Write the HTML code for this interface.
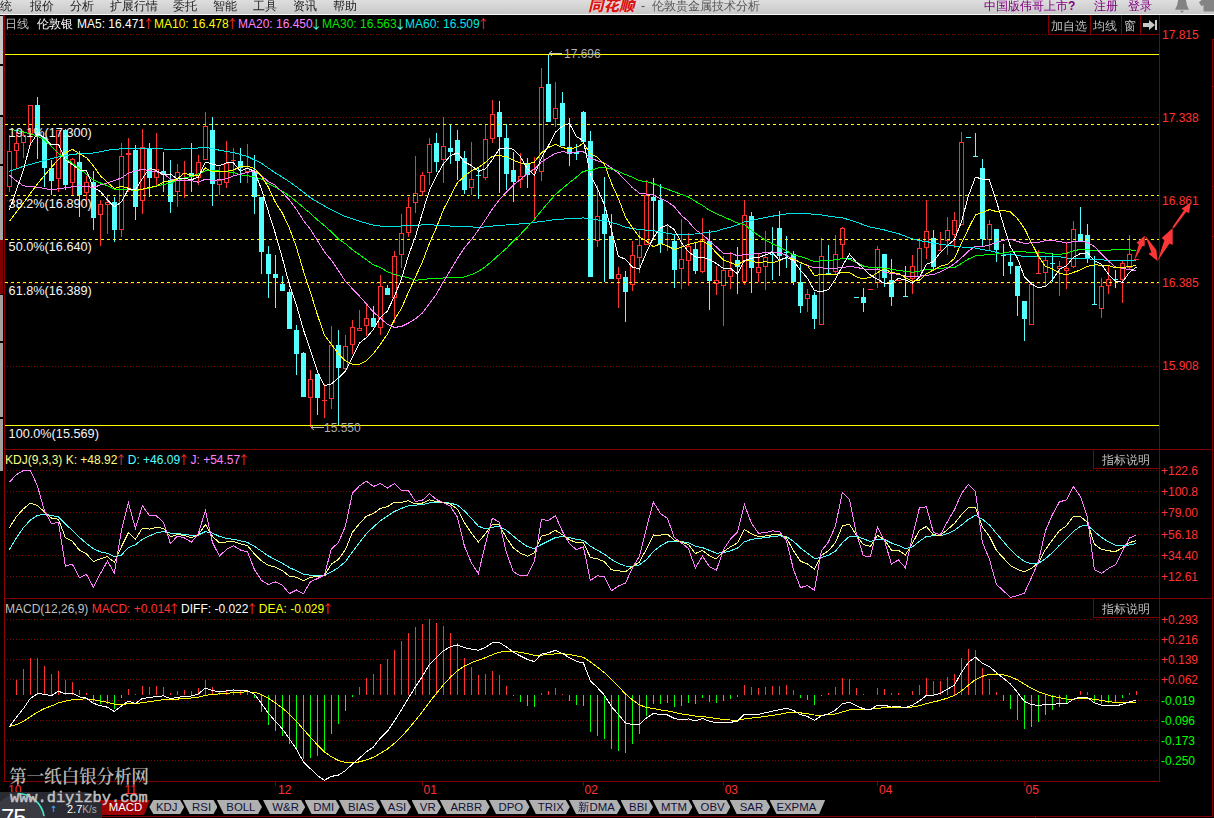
<!DOCTYPE html><html><head><meta charset="utf-8"><title>伦敦贵金属技术分析</title><style>
html,body{margin:0;padding:0;background:#000;}
body{width:1214px;height:818px;position:relative;overflow:hidden;font:12px/14px "Liberation Sans","WenQuanYi Zen Hei","Noto Sans CJK SC",sans-serif;color:#c0c0c0;}
.t{position:absolute;white-space:nowrap;line-height:14px;height:14px;}
#title{position:absolute;left:0;top:0;width:1214px;height:15px;background:linear-gradient(#dedede,#d2d2d2 55%,#c6c6c6);border-bottom:1px solid #f8f8f8;box-sizing:border-box;overflow:hidden;color:#222;}
#title .t{top:-1px;}
.ar{font-family:'Noto Sans CJK SC',sans-serif;display:inline-block;width:7px;text-indent:-2.5px;overflow:visible;vertical-align:top;}
.ls{position:absolute;left:0;width:3px;background:#b4b4b4;}
.r{color:#ff3232}.c{color:#54ffff}.w{color:#fff}.y{color:#ffff00}.m{color:#ff80ff}.g{color:#00e600}.b{color:#00e6e6}
.ax{position:absolute;left:1162px;white-space:nowrap;line-height:14px;height:14px;font-size:12px}
.tab{position:absolute;top:800px;height:14px;line-height:14px;background:#b0b0b0;color:#222;text-align:center;font-size:11.4px;color:#101038;clip-path:polygon(0 0,calc(100% - 4px) 0,100% 50%,calc(100% - 4px) 100%,7px 100%);padding-left:3px;box-sizing:border-box}
</style></head><body>
<svg width="1214" height="818" viewBox="0 0 1214 818" style="position:absolute;left:0;top:0" shape-rendering="crispEdges">
<line x1="7" y1="34.5" x2="1159" y2="34.5" stroke="#8a0000" stroke-width="1" stroke-dasharray="1 2"/>
<line x1="7" y1="117.5" x2="1159" y2="117.5" stroke="#8a0000" stroke-width="1" stroke-dasharray="1 2"/>
<line x1="7" y1="200.5" x2="1159" y2="200.5" stroke="#8a0000" stroke-width="1" stroke-dasharray="1 2"/>
<line x1="7" y1="283.5" x2="1159" y2="283.5" stroke="#8a0000" stroke-width="1" stroke-dasharray="1 2"/>
<line x1="7" y1="366.5" x2="1159" y2="366.5" stroke="#8a0000" stroke-width="1" stroke-dasharray="1 2"/>
<line x1="7" y1="470.5" x2="1159" y2="470.5" stroke="#8a0000" stroke-width="1" stroke-dasharray="1 2"/>
<line x1="7" y1="491.5" x2="1159" y2="491.5" stroke="#8a0000" stroke-width="1" stroke-dasharray="1 2"/>
<line x1="7" y1="512.5" x2="1159" y2="512.5" stroke="#8a0000" stroke-width="1" stroke-dasharray="1 2"/>
<line x1="7" y1="534.5" x2="1159" y2="534.5" stroke="#8a0000" stroke-width="1" stroke-dasharray="1 2"/>
<line x1="7" y1="555.5" x2="1159" y2="555.5" stroke="#8a0000" stroke-width="1" stroke-dasharray="1 2"/>
<line x1="7" y1="576.5" x2="1159" y2="576.5" stroke="#8a0000" stroke-width="1" stroke-dasharray="1 2"/>
<line x1="7" y1="619.5" x2="1159" y2="619.5" stroke="#8a0000" stroke-width="1" stroke-dasharray="1 2"/>
<line x1="7" y1="639.5" x2="1159" y2="639.5" stroke="#8a0000" stroke-width="1" stroke-dasharray="1 2"/>
<line x1="7" y1="659.5" x2="1159" y2="659.5" stroke="#8a0000" stroke-width="1" stroke-dasharray="1 2"/>
<line x1="7" y1="679.5" x2="1159" y2="679.5" stroke="#8a0000" stroke-width="1" stroke-dasharray="1 2"/>
<line x1="7" y1="700.5" x2="1159" y2="700.5" stroke="#8a0000" stroke-width="1" stroke-dasharray="1 2"/>
<line x1="7" y1="720.5" x2="1159" y2="720.5" stroke="#8a0000" stroke-width="1" stroke-dasharray="1 2"/>
<line x1="7" y1="740.5" x2="1159" y2="740.5" stroke="#8a0000" stroke-width="1" stroke-dasharray="1 2"/>
<line x1="7" y1="760.5" x2="1159" y2="760.5" stroke="#8a0000" stroke-width="1" stroke-dasharray="1 2"/>
<line x1="4.5" y1="14" x2="4.5" y2="782" stroke="#8c0000"/>
<line x1="3.5" y1="15" x2="3.5" y2="117" stroke="#800000"/>
<line x1="1159.5" y1="14" x2="1159.5" y2="781" stroke="#820000"/>
<line x1="1212.5" y1="39" x2="1212.5" y2="816" stroke="#820000"/>
<line x1="1212" y1="39.5" x2="1214" y2="39.5" stroke="#820000"/>
<line x1="1212" y1="86.5" x2="1214" y2="86.5" stroke="#820000"/>
<line x1="1212" y1="186.5" x2="1214" y2="186.5" stroke="#820000"/>
<line x1="1212" y1="236.5" x2="1214" y2="236.5" stroke="#820000"/>
<line x1="5" y1="449.5" x2="1212" y2="449.5" stroke="#820000"/>
<line x1="5" y1="598.5" x2="1212" y2="598.5" stroke="#820000"/>
<line x1="5" y1="781.5" x2="1160" y2="781.5" stroke="#820000"/>
<line x1="0" y1="816.5" x2="1213" y2="816.5" stroke="#820000"/>
<line x1="1035.5" y1="816" x2="1035.5" y2="818" stroke="#820000"/>
<line x1="1048.5" y1="14" x2="1048.5" y2="34" stroke="#820000"/>
<line x1="1090.5" y1="14" x2="1090.5" y2="34" stroke="#820000"/>
<line x1="1121.5" y1="14" x2="1121.5" y2="34" stroke="#820000"/>
<line x1="1140.5" y1="14" x2="1140.5" y2="34" stroke="#820000"/>
<line x1="1048" y1="34.5" x2="1160" y2="34.5" stroke="#820000"/>
<line x1="1093.5" y1="449" x2="1093.5" y2="468.5" stroke="#820000"/>
<line x1="1093" y1="468.5" x2="1160" y2="468.5" stroke="#820000"/>
<line x1="1093.5" y1="598" x2="1093.5" y2="617.5" stroke="#820000"/>
<line x1="1093" y1="617.5" x2="1160" y2="617.5" stroke="#820000"/>
<line x1="121.5" y1="782" x2="121.5" y2="786" stroke="#820000"/>
<line x1="275.5" y1="782" x2="275.5" y2="786" stroke="#820000"/>
<line x1="422.5" y1="782" x2="422.5" y2="786" stroke="#820000"/>
<line x1="583.5" y1="782" x2="583.5" y2="786" stroke="#820000"/>
<line x1="723.5" y1="782" x2="723.5" y2="786" stroke="#820000"/>
<line x1="877.5" y1="782" x2="877.5" y2="786" stroke="#820000"/>
<line x1="1024.5" y1="782" x2="1024.5" y2="786" stroke="#820000"/>
<line x1="9.5" y1="135" x2="9.5" y2="151" stroke="#ff3232"/>
<line x1="9.5" y1="186" x2="9.5" y2="192" stroke="#ff3232"/>
<rect x="7.5" y="151.5" width="4" height="35" fill="#000" stroke="#ff3232"/>
<line x1="16.5" y1="132" x2="16.5" y2="143" stroke="#ff3232"/>
<line x1="16.5" y1="150" x2="16.5" y2="168" stroke="#ff3232"/>
<rect x="14.5" y="143.5" width="4" height="7" fill="#000" stroke="#ff3232"/>
<line x1="23.5" y1="132" x2="23.5" y2="135" stroke="#ff3232"/>
<line x1="23.5" y1="142" x2="23.5" y2="158" stroke="#ff3232"/>
<rect x="21.5" y="135.5" width="4" height="7" fill="#000" stroke="#ff3232"/>
<line x1="30.5" y1="133" x2="30.5" y2="146" stroke="#ff3232"/>
<rect x="28.5" y="105.5" width="4" height="28" fill="#000" stroke="#ff3232"/>
<line x1="37.5" y1="97" x2="37.5" y2="159" stroke="#54ffff"/>
<rect x="35" y="105" width="5" height="31" fill="#54ffff"/>
<line x1="44.5" y1="137" x2="44.5" y2="187" stroke="#54ffff"/>
<rect x="42" y="137" width="5" height="31" fill="#54ffff"/>
<line x1="51.5" y1="160" x2="51.5" y2="195" stroke="#54ffff"/>
<rect x="49" y="168" width="5" height="13" fill="#54ffff"/>
<line x1="58.5" y1="178" x2="58.5" y2="192" stroke="#ff3232"/>
<rect x="56.5" y="130.5" width="4" height="48" fill="#000" stroke="#ff3232"/>
<line x1="65.5" y1="129" x2="65.5" y2="190" stroke="#54ffff"/>
<rect x="63" y="130" width="5" height="55" fill="#54ffff"/>
<line x1="72.5" y1="158" x2="72.5" y2="159" stroke="#ff3232"/>
<line x1="72.5" y1="182" x2="72.5" y2="196" stroke="#ff3232"/>
<rect x="70.5" y="159.5" width="4" height="23" fill="#000" stroke="#ff3232"/>
<line x1="79.5" y1="151" x2="79.5" y2="217" stroke="#54ffff"/>
<rect x="77" y="162" width="5" height="33" fill="#54ffff"/>
<line x1="86.5" y1="176" x2="86.5" y2="182" stroke="#ff3232"/>
<line x1="86.5" y1="192" x2="86.5" y2="207" stroke="#ff3232"/>
<rect x="84.5" y="182.5" width="4" height="10" fill="#000" stroke="#ff3232"/>
<line x1="93.5" y1="171" x2="93.5" y2="230" stroke="#54ffff"/>
<rect x="91" y="182" width="5" height="36" fill="#54ffff"/>
<line x1="100.5" y1="200" x2="100.5" y2="204" stroke="#ff3232"/>
<line x1="100.5" y1="214" x2="100.5" y2="246" stroke="#ff3232"/>
<rect x="98.5" y="204.5" width="4" height="10" fill="#000" stroke="#ff3232"/>
<line x1="107.5" y1="196" x2="107.5" y2="202" stroke="#ff3232"/>
<line x1="107.5" y1="204" x2="107.5" y2="234" stroke="#ff3232"/>
<rect x="105.5" y="202.5" width="4" height="2" fill="#000" stroke="#ff3232"/>
<line x1="114.5" y1="197" x2="114.5" y2="242" stroke="#54ffff"/>
<rect x="112" y="202" width="5" height="28" fill="#54ffff"/>
<line x1="121.5" y1="143" x2="121.5" y2="156" stroke="#ff3232"/>
<line x1="121.5" y1="229" x2="121.5" y2="237" stroke="#ff3232"/>
<rect x="119.5" y="156.5" width="4" height="73" fill="#000" stroke="#ff3232"/>
<line x1="128.5" y1="138" x2="128.5" y2="153" stroke="#ff3232"/>
<line x1="128.5" y1="154" x2="128.5" y2="192" stroke="#ff3232"/>
<rect x="126.5" y="153.5" width="4" height="1" fill="#000" stroke="#ff3232"/>
<line x1="135.5" y1="145" x2="135.5" y2="220" stroke="#54ffff"/>
<rect x="133" y="150" width="5" height="57" fill="#54ffff"/>
<line x1="142.5" y1="129" x2="142.5" y2="147" stroke="#ff3232"/>
<line x1="142.5" y1="200" x2="142.5" y2="214" stroke="#ff3232"/>
<rect x="140.5" y="147.5" width="4" height="53" fill="#000" stroke="#ff3232"/>
<line x1="149.5" y1="143" x2="149.5" y2="197" stroke="#54ffff"/>
<rect x="147" y="149" width="5" height="29" fill="#54ffff"/>
<line x1="156.5" y1="133" x2="156.5" y2="169" stroke="#ff3232"/>
<line x1="156.5" y1="177" x2="156.5" y2="186" stroke="#ff3232"/>
<rect x="154.5" y="169.5" width="4" height="8" fill="#000" stroke="#ff3232"/>
<line x1="163.5" y1="152" x2="163.5" y2="192" stroke="#54ffff"/>
<rect x="161" y="171" width="5" height="4" fill="#54ffff"/>
<line x1="170.5" y1="160" x2="170.5" y2="213" stroke="#54ffff"/>
<rect x="168" y="180" width="5" height="22" fill="#54ffff"/>
<line x1="177.5" y1="164" x2="177.5" y2="172" stroke="#ff3232"/>
<line x1="177.5" y1="191" x2="177.5" y2="207" stroke="#ff3232"/>
<rect x="175.5" y="172.5" width="4" height="19" fill="#000" stroke="#ff3232"/>
<line x1="184.5" y1="161" x2="184.5" y2="198" stroke="#ff3232"/>
<line x1="182" y1="173.5" x2="187" y2="173.5" stroke="#ff3232"/>
<line x1="191.5" y1="143" x2="191.5" y2="192" stroke="#54ffff"/>
<rect x="189" y="173" width="5" height="4" fill="#54ffff"/>
<line x1="198.5" y1="155" x2="198.5" y2="162" stroke="#ff3232"/>
<line x1="198.5" y1="177" x2="198.5" y2="185" stroke="#ff3232"/>
<rect x="196.5" y="162.5" width="4" height="15" fill="#000" stroke="#ff3232"/>
<line x1="205.5" y1="112" x2="205.5" y2="126" stroke="#ff3232"/>
<rect x="203.5" y="126.5" width="4" height="33" fill="#000" stroke="#ff3232"/>
<line x1="212.5" y1="117" x2="212.5" y2="206" stroke="#54ffff"/>
<rect x="210" y="130" width="5" height="54" fill="#54ffff"/>
<line x1="219.5" y1="167" x2="219.5" y2="180" stroke="#ff3232"/>
<line x1="219.5" y1="184" x2="219.5" y2="195" stroke="#ff3232"/>
<rect x="217.5" y="180.5" width="4" height="4" fill="#000" stroke="#ff3232"/>
<line x1="226.5" y1="141" x2="226.5" y2="163" stroke="#ff3232"/>
<line x1="226.5" y1="182" x2="226.5" y2="188" stroke="#ff3232"/>
<rect x="224.5" y="163.5" width="4" height="19" fill="#000" stroke="#ff3232"/>
<line x1="233.5" y1="148" x2="233.5" y2="176" stroke="#ff3232"/>
<line x1="231" y1="160.5" x2="236" y2="160.5" stroke="#ff3232"/>
<line x1="240.5" y1="148" x2="240.5" y2="183" stroke="#54ffff"/>
<rect x="238" y="161" width="5" height="7" fill="#54ffff"/>
<line x1="247.5" y1="144" x2="247.5" y2="168" stroke="#ff3232"/>
<line x1="247.5" y1="171" x2="247.5" y2="183" stroke="#ff3232"/>
<rect x="245.5" y="168.5" width="4" height="3" fill="#000" stroke="#ff3232"/>
<line x1="254.5" y1="155" x2="254.5" y2="214" stroke="#54ffff"/>
<rect x="252" y="172" width="5" height="25" fill="#54ffff"/>
<line x1="261.5" y1="197" x2="261.5" y2="274" stroke="#54ffff"/>
<rect x="259" y="197" width="5" height="55" fill="#54ffff"/>
<line x1="268.5" y1="246" x2="268.5" y2="298" stroke="#54ffff"/>
<rect x="266" y="254" width="5" height="20" fill="#54ffff"/>
<line x1="275.5" y1="255" x2="275.5" y2="308" stroke="#54ffff"/>
<rect x="273" y="274" width="5" height="4" fill="#54ffff"/>
<line x1="282.5" y1="276" x2="282.5" y2="291" stroke="#54ffff"/>
<rect x="280" y="284" width="5" height="7" fill="#54ffff"/>
<line x1="289.5" y1="289" x2="289.5" y2="329" stroke="#54ffff"/>
<rect x="287" y="292" width="5" height="37" fill="#54ffff"/>
<line x1="296.5" y1="325" x2="296.5" y2="375" stroke="#54ffff"/>
<rect x="294" y="330" width="5" height="24" fill="#54ffff"/>
<line x1="303.5" y1="352" x2="303.5" y2="397" stroke="#54ffff"/>
<rect x="301" y="353" width="5" height="44" fill="#54ffff"/>
<line x1="310.5" y1="370" x2="310.5" y2="379" stroke="#ff3232"/>
<line x1="310.5" y1="397" x2="310.5" y2="427" stroke="#ff3232"/>
<rect x="308.5" y="379.5" width="4" height="18" fill="#000" stroke="#ff3232"/>
<line x1="317.5" y1="374" x2="317.5" y2="415" stroke="#54ffff"/>
<rect x="315" y="374" width="5" height="24" fill="#54ffff"/>
<line x1="324.5" y1="384" x2="324.5" y2="418" stroke="#ff3232"/>
<line x1="322" y1="400.5" x2="327" y2="400.5" stroke="#ff3232"/>
<line x1="331.5" y1="326" x2="331.5" y2="345" stroke="#ff3232"/>
<line x1="331.5" y1="398" x2="331.5" y2="409" stroke="#ff3232"/>
<rect x="329.5" y="345.5" width="4" height="53" fill="#000" stroke="#ff3232"/>
<line x1="338.5" y1="330" x2="338.5" y2="426" stroke="#54ffff"/>
<rect x="336" y="345" width="5" height="23" fill="#54ffff"/>
<line x1="345.5" y1="335" x2="345.5" y2="346" stroke="#ff3232"/>
<line x1="345.5" y1="368" x2="345.5" y2="370" stroke="#ff3232"/>
<rect x="343.5" y="346.5" width="4" height="22" fill="#000" stroke="#ff3232"/>
<line x1="352.5" y1="320" x2="352.5" y2="327" stroke="#ff3232"/>
<line x1="352.5" y1="344" x2="352.5" y2="354" stroke="#ff3232"/>
<rect x="350.5" y="327.5" width="4" height="17" fill="#000" stroke="#ff3232"/>
<line x1="359.5" y1="310" x2="359.5" y2="328" stroke="#ff3232"/>
<rect x="357.5" y="328.5" width="4" height="2" fill="#000" stroke="#ff3232"/>
<line x1="366.5" y1="305" x2="366.5" y2="318" stroke="#ff3232"/>
<line x1="366.5" y1="325" x2="366.5" y2="336" stroke="#ff3232"/>
<rect x="364.5" y="318.5" width="4" height="7" fill="#000" stroke="#ff3232"/>
<line x1="373.5" y1="306" x2="373.5" y2="327" stroke="#54ffff"/>
<rect x="371" y="318" width="5" height="9" fill="#54ffff"/>
<line x1="380.5" y1="275" x2="380.5" y2="286" stroke="#ff3232"/>
<line x1="380.5" y1="327" x2="380.5" y2="335" stroke="#ff3232"/>
<rect x="378.5" y="286.5" width="4" height="41" fill="#000" stroke="#ff3232"/>
<line x1="387.5" y1="285" x2="387.5" y2="295" stroke="#54ffff"/>
<rect x="385" y="288" width="5" height="7" fill="#54ffff"/>
<line x1="394.5" y1="251" x2="394.5" y2="256" stroke="#ff3232"/>
<line x1="394.5" y1="297" x2="394.5" y2="323" stroke="#ff3232"/>
<rect x="392.5" y="256.5" width="4" height="41" fill="#000" stroke="#ff3232"/>
<line x1="401.5" y1="214" x2="401.5" y2="233" stroke="#ff3232"/>
<line x1="401.5" y1="254" x2="401.5" y2="268" stroke="#ff3232"/>
<rect x="399.5" y="233.5" width="4" height="21" fill="#000" stroke="#ff3232"/>
<line x1="408.5" y1="197" x2="408.5" y2="207" stroke="#ff3232"/>
<line x1="408.5" y1="232" x2="408.5" y2="237" stroke="#ff3232"/>
<rect x="406.5" y="207.5" width="4" height="25" fill="#000" stroke="#ff3232"/>
<line x1="415.5" y1="156" x2="415.5" y2="193" stroke="#ff3232"/>
<line x1="415.5" y1="202" x2="415.5" y2="213" stroke="#ff3232"/>
<rect x="413.5" y="193.5" width="4" height="9" fill="#000" stroke="#ff3232"/>
<line x1="422.5" y1="172" x2="422.5" y2="175" stroke="#ff3232"/>
<line x1="422.5" y1="191" x2="422.5" y2="196" stroke="#ff3232"/>
<rect x="420.5" y="175.5" width="4" height="16" fill="#000" stroke="#ff3232"/>
<line x1="429.5" y1="138" x2="429.5" y2="144" stroke="#ff3232"/>
<line x1="429.5" y1="172" x2="429.5" y2="185" stroke="#ff3232"/>
<rect x="427.5" y="144.5" width="4" height="28" fill="#000" stroke="#ff3232"/>
<line x1="436.5" y1="133" x2="436.5" y2="172" stroke="#54ffff"/>
<rect x="434" y="143" width="5" height="19" fill="#54ffff"/>
<line x1="443.5" y1="117" x2="443.5" y2="146" stroke="#ff3232"/>
<line x1="443.5" y1="159" x2="443.5" y2="183" stroke="#ff3232"/>
<rect x="441.5" y="146.5" width="4" height="13" fill="#000" stroke="#ff3232"/>
<line x1="450.5" y1="124" x2="450.5" y2="164" stroke="#54ffff"/>
<rect x="448" y="148" width="5" height="4" fill="#54ffff"/>
<line x1="457.5" y1="130" x2="457.5" y2="180" stroke="#54ffff"/>
<rect x="455" y="140" width="5" height="21" fill="#54ffff"/>
<line x1="464.5" y1="151" x2="464.5" y2="194" stroke="#54ffff"/>
<rect x="462" y="158" width="5" height="32" fill="#54ffff"/>
<line x1="471.5" y1="142" x2="471.5" y2="179" stroke="#ff3232"/>
<line x1="471.5" y1="187" x2="471.5" y2="195" stroke="#ff3232"/>
<rect x="469.5" y="179.5" width="4" height="8" fill="#000" stroke="#ff3232"/>
<line x1="478.5" y1="168" x2="478.5" y2="199" stroke="#54ffff"/>
<line x1="476" y1="175.5" x2="481" y2="175.5" stroke="#54ffff"/>
<line x1="485.5" y1="124" x2="485.5" y2="139" stroke="#ff3232"/>
<line x1="485.5" y1="177" x2="485.5" y2="180" stroke="#ff3232"/>
<rect x="483.5" y="139.5" width="4" height="38" fill="#000" stroke="#ff3232"/>
<line x1="492.5" y1="100" x2="492.5" y2="114" stroke="#ff3232"/>
<line x1="492.5" y1="138" x2="492.5" y2="143" stroke="#ff3232"/>
<rect x="490.5" y="114.5" width="4" height="24" fill="#000" stroke="#ff3232"/>
<line x1="499.5" y1="101" x2="499.5" y2="193" stroke="#54ffff"/>
<rect x="497" y="112" width="5" height="25" fill="#54ffff"/>
<line x1="506.5" y1="124" x2="506.5" y2="190" stroke="#54ffff"/>
<rect x="504" y="138" width="5" height="36" fill="#54ffff"/>
<line x1="513.5" y1="152" x2="513.5" y2="202" stroke="#54ffff"/>
<rect x="511" y="170" width="5" height="12" fill="#54ffff"/>
<line x1="520.5" y1="153" x2="520.5" y2="176" stroke="#ff3232"/>
<line x1="520.5" y1="179" x2="520.5" y2="188" stroke="#ff3232"/>
<rect x="518.5" y="176.5" width="4" height="3" fill="#000" stroke="#ff3232"/>
<line x1="527.5" y1="158" x2="527.5" y2="188" stroke="#54ffff"/>
<rect x="525" y="163" width="5" height="12" fill="#54ffff"/>
<line x1="534.5" y1="157" x2="534.5" y2="221" stroke="#ff3232"/>
<line x1="532" y1="169.5" x2="537" y2="169.5" stroke="#ff3232"/>
<line x1="541.5" y1="68" x2="541.5" y2="87" stroke="#ff3232"/>
<line x1="541.5" y1="171" x2="541.5" y2="181" stroke="#ff3232"/>
<rect x="539.5" y="87.5" width="4" height="84" fill="#000" stroke="#ff3232"/>
<line x1="548.5" y1="54" x2="548.5" y2="122" stroke="#54ffff"/>
<rect x="546" y="84" width="5" height="38" fill="#54ffff"/>
<line x1="555.5" y1="82" x2="555.5" y2="108" stroke="#ff3232"/>
<line x1="555.5" y1="118" x2="555.5" y2="127" stroke="#ff3232"/>
<rect x="553.5" y="108.5" width="4" height="10" fill="#000" stroke="#ff3232"/>
<line x1="562.5" y1="92" x2="562.5" y2="146" stroke="#54ffff"/>
<rect x="560" y="103" width="5" height="43" fill="#54ffff"/>
<line x1="569.5" y1="118" x2="569.5" y2="166" stroke="#54ffff"/>
<rect x="567" y="147" width="5" height="7" fill="#54ffff"/>
<line x1="576.5" y1="144" x2="576.5" y2="160" stroke="#54ffff"/>
<rect x="574" y="152" width="5" height="2" fill="#54ffff"/>
<line x1="583.5" y1="111" x2="583.5" y2="142" stroke="#54ffff"/>
<rect x="581" y="112" width="5" height="30" fill="#54ffff"/>
<line x1="590.5" y1="131" x2="590.5" y2="277" stroke="#54ffff"/>
<rect x="588" y="141" width="5" height="136" fill="#54ffff"/>
<line x1="597.5" y1="185" x2="597.5" y2="216" stroke="#ff3232"/>
<line x1="597.5" y1="240" x2="597.5" y2="247" stroke="#ff3232"/>
<rect x="595.5" y="216.5" width="4" height="24" fill="#000" stroke="#ff3232"/>
<line x1="604.5" y1="177" x2="604.5" y2="282" stroke="#54ffff"/>
<rect x="602" y="214" width="5" height="20" fill="#54ffff"/>
<line x1="611.5" y1="214" x2="611.5" y2="279" stroke="#54ffff"/>
<rect x="609" y="236" width="5" height="43" fill="#54ffff"/>
<line x1="618.5" y1="267" x2="618.5" y2="274" stroke="#ff3232"/>
<line x1="618.5" y1="278" x2="618.5" y2="308" stroke="#ff3232"/>
<rect x="616.5" y="274.5" width="4" height="4" fill="#000" stroke="#ff3232"/>
<line x1="625.5" y1="271" x2="625.5" y2="322" stroke="#54ffff"/>
<rect x="623" y="277" width="5" height="15" fill="#54ffff"/>
<line x1="632.5" y1="241" x2="632.5" y2="255" stroke="#ff3232"/>
<line x1="632.5" y1="284" x2="632.5" y2="291" stroke="#ff3232"/>
<rect x="630.5" y="255.5" width="4" height="29" fill="#000" stroke="#ff3232"/>
<line x1="639.5" y1="231" x2="639.5" y2="245" stroke="#ff3232"/>
<line x1="639.5" y1="257" x2="639.5" y2="273" stroke="#ff3232"/>
<rect x="637.5" y="245.5" width="4" height="12" fill="#000" stroke="#ff3232"/>
<line x1="646.5" y1="180" x2="646.5" y2="195" stroke="#ff3232"/>
<rect x="644.5" y="195.5" width="4" height="49" fill="#000" stroke="#ff3232"/>
<line x1="653.5" y1="178" x2="653.5" y2="238" stroke="#54ffff"/>
<rect x="651" y="197" width="5" height="4" fill="#54ffff"/>
<line x1="660.5" y1="184" x2="660.5" y2="253" stroke="#54ffff"/>
<rect x="658" y="200" width="5" height="44" fill="#54ffff"/>
<line x1="667.5" y1="224" x2="667.5" y2="251" stroke="#ff3232"/>
<line x1="665" y1="239.5" x2="670" y2="239.5" stroke="#ff3232"/>
<line x1="674.5" y1="234" x2="674.5" y2="288" stroke="#54ffff"/>
<rect x="672" y="241" width="5" height="29" fill="#54ffff"/>
<line x1="681.5" y1="219" x2="681.5" y2="259" stroke="#ff3232"/>
<line x1="681.5" y1="268" x2="681.5" y2="289" stroke="#ff3232"/>
<rect x="679.5" y="259.5" width="4" height="9" fill="#000" stroke="#ff3232"/>
<line x1="688.5" y1="233" x2="688.5" y2="246" stroke="#ff3232"/>
<line x1="688.5" y1="260" x2="688.5" y2="286" stroke="#ff3232"/>
<rect x="686.5" y="246.5" width="4" height="14" fill="#000" stroke="#ff3232"/>
<line x1="695.5" y1="242" x2="695.5" y2="274" stroke="#54ffff"/>
<rect x="693" y="249" width="5" height="22" fill="#54ffff"/>
<line x1="702.5" y1="218" x2="702.5" y2="239" stroke="#ff3232"/>
<line x1="702.5" y1="271" x2="702.5" y2="273" stroke="#ff3232"/>
<rect x="700.5" y="239.5" width="4" height="32" fill="#000" stroke="#ff3232"/>
<line x1="709.5" y1="230" x2="709.5" y2="310" stroke="#54ffff"/>
<rect x="707" y="241" width="5" height="40" fill="#54ffff"/>
<line x1="716.5" y1="266" x2="716.5" y2="280" stroke="#ff3232"/>
<line x1="716.5" y1="283" x2="716.5" y2="295" stroke="#ff3232"/>
<rect x="714.5" y="280.5" width="4" height="3" fill="#000" stroke="#ff3232"/>
<line x1="723.5" y1="256" x2="723.5" y2="270" stroke="#ff3232"/>
<line x1="723.5" y1="285" x2="723.5" y2="326" stroke="#ff3232"/>
<rect x="721.5" y="270.5" width="4" height="15" fill="#000" stroke="#ff3232"/>
<line x1="730.5" y1="252" x2="730.5" y2="270" stroke="#ff3232"/>
<line x1="730.5" y1="276" x2="730.5" y2="289" stroke="#ff3232"/>
<rect x="728.5" y="270.5" width="4" height="6" fill="#000" stroke="#ff3232"/>
<line x1="737.5" y1="247" x2="737.5" y2="294" stroke="#54ffff"/>
<rect x="735" y="260" width="5" height="7" fill="#54ffff"/>
<line x1="744.5" y1="200" x2="744.5" y2="215" stroke="#ff3232"/>
<line x1="744.5" y1="281" x2="744.5" y2="285" stroke="#ff3232"/>
<rect x="742.5" y="215.5" width="4" height="66" fill="#000" stroke="#ff3232"/>
<line x1="751.5" y1="212" x2="751.5" y2="293" stroke="#54ffff"/>
<rect x="749" y="216" width="5" height="52" fill="#54ffff"/>
<line x1="758.5" y1="253" x2="758.5" y2="267" stroke="#ff3232"/>
<line x1="758.5" y1="272" x2="758.5" y2="282" stroke="#ff3232"/>
<rect x="756.5" y="267.5" width="4" height="5" fill="#000" stroke="#ff3232"/>
<line x1="765.5" y1="231" x2="765.5" y2="257" stroke="#ff3232"/>
<line x1="765.5" y1="266" x2="765.5" y2="290" stroke="#ff3232"/>
<rect x="763.5" y="257.5" width="4" height="9" fill="#000" stroke="#ff3232"/>
<line x1="772.5" y1="227" x2="772.5" y2="280" stroke="#54ffff"/>
<line x1="770" y1="254.5" x2="775" y2="254.5" stroke="#54ffff"/>
<line x1="779.5" y1="211" x2="779.5" y2="276" stroke="#54ffff"/>
<rect x="777" y="228" width="5" height="28" fill="#54ffff"/>
<line x1="786.5" y1="236" x2="786.5" y2="268" stroke="#54ffff"/>
<line x1="784" y1="252.5" x2="789" y2="252.5" stroke="#54ffff"/>
<line x1="793.5" y1="251" x2="793.5" y2="285" stroke="#54ffff"/>
<rect x="791" y="254" width="5" height="28" fill="#54ffff"/>
<line x1="800.5" y1="264" x2="800.5" y2="313" stroke="#54ffff"/>
<rect x="798" y="282" width="5" height="24" fill="#54ffff"/>
<line x1="807.5" y1="289" x2="807.5" y2="294" stroke="#ff3232"/>
<line x1="807.5" y1="298" x2="807.5" y2="312" stroke="#ff3232"/>
<rect x="805.5" y="294.5" width="4" height="4" fill="#000" stroke="#ff3232"/>
<line x1="814.5" y1="292" x2="814.5" y2="329" stroke="#54ffff"/>
<rect x="812" y="295" width="5" height="24" fill="#54ffff"/>
<line x1="821.5" y1="238" x2="821.5" y2="256" stroke="#ff3232"/>
<rect x="819.5" y="256.5" width="4" height="68" fill="#000" stroke="#ff3232"/>
<line x1="828.5" y1="245" x2="828.5" y2="273" stroke="#54ffff"/>
<line x1="826" y1="273.5" x2="831" y2="273.5" stroke="#54ffff"/>
<line x1="835.5" y1="235" x2="835.5" y2="254" stroke="#ff3232"/>
<line x1="835.5" y1="271" x2="835.5" y2="274" stroke="#ff3232"/>
<rect x="833.5" y="254.5" width="4" height="17" fill="#000" stroke="#ff3232"/>
<line x1="842.5" y1="227" x2="842.5" y2="228" stroke="#ff3232"/>
<line x1="842.5" y1="244" x2="842.5" y2="259" stroke="#ff3232"/>
<rect x="840.5" y="228.5" width="4" height="16" fill="#000" stroke="#ff3232"/>
<line x1="847" y1="258.5" x2="852" y2="258.5" stroke="#54ffff"/>
<line x1="854" y1="297.5" x2="859" y2="297.5" stroke="#54ffff"/>
<line x1="863.5" y1="288" x2="863.5" y2="312" stroke="#54ffff"/>
<rect x="861" y="297" width="5" height="6" fill="#54ffff"/>
<line x1="868" y1="289.5" x2="873" y2="289.5" stroke="#ff3232"/>
<line x1="877.5" y1="246" x2="877.5" y2="249" stroke="#ff3232"/>
<line x1="877.5" y1="282" x2="877.5" y2="288" stroke="#ff3232"/>
<rect x="875.5" y="249.5" width="4" height="33" fill="#000" stroke="#ff3232"/>
<line x1="884.5" y1="254" x2="884.5" y2="287" stroke="#54ffff"/>
<rect x="882" y="254" width="5" height="24" fill="#54ffff"/>
<line x1="891.5" y1="259" x2="891.5" y2="306" stroke="#54ffff"/>
<rect x="889" y="280" width="5" height="17" fill="#54ffff"/>
<line x1="896" y1="280.5" x2="901" y2="280.5" stroke="#ff3232"/>
<line x1="905.5" y1="266" x2="905.5" y2="296" stroke="#54ffff"/>
<line x1="903" y1="296.5" x2="908" y2="296.5" stroke="#54ffff"/>
<line x1="912.5" y1="255" x2="912.5" y2="266" stroke="#ff3232"/>
<line x1="912.5" y1="278" x2="912.5" y2="294" stroke="#ff3232"/>
<rect x="910.5" y="266.5" width="4" height="12" fill="#000" stroke="#ff3232"/>
<line x1="919.5" y1="238" x2="919.5" y2="248" stroke="#ff3232"/>
<rect x="917.5" y="248.5" width="4" height="28" fill="#000" stroke="#ff3232"/>
<line x1="926.5" y1="200" x2="926.5" y2="231" stroke="#ff3232"/>
<line x1="926.5" y1="247" x2="926.5" y2="259" stroke="#ff3232"/>
<rect x="924.5" y="231.5" width="4" height="16" fill="#000" stroke="#ff3232"/>
<line x1="933.5" y1="230" x2="933.5" y2="270" stroke="#54ffff"/>
<rect x="931" y="238" width="5" height="29" fill="#54ffff"/>
<line x1="940.5" y1="232" x2="940.5" y2="250" stroke="#ff3232"/>
<line x1="938" y1="250.5" x2="943" y2="250.5" stroke="#ff3232"/>
<line x1="947.5" y1="217" x2="947.5" y2="230" stroke="#ff3232"/>
<line x1="947.5" y1="240" x2="947.5" y2="255" stroke="#ff3232"/>
<rect x="945.5" y="230.5" width="4" height="10" fill="#000" stroke="#ff3232"/>
<line x1="954.5" y1="212" x2="954.5" y2="220" stroke="#ff3232"/>
<line x1="954.5" y1="234" x2="954.5" y2="248" stroke="#ff3232"/>
<rect x="952.5" y="220.5" width="4" height="14" fill="#000" stroke="#ff3232"/>
<line x1="961.5" y1="132" x2="961.5" y2="142" stroke="#ff3232"/>
<rect x="959.5" y="142.5" width="4" height="82" fill="#000" stroke="#ff3232"/>
<line x1="966" y1="137.5" x2="971" y2="137.5" stroke="#54ffff"/>
<line x1="975.5" y1="133" x2="975.5" y2="156" stroke="#54ffff"/>
<line x1="973" y1="156.5" x2="978" y2="156.5" stroke="#54ffff"/>
<line x1="982.5" y1="159" x2="982.5" y2="247" stroke="#54ffff"/>
<rect x="980" y="168" width="5" height="71" fill="#54ffff"/>
<line x1="989.5" y1="220" x2="989.5" y2="224" stroke="#ff3232"/>
<line x1="989.5" y1="239" x2="989.5" y2="251" stroke="#ff3232"/>
<rect x="987.5" y="224.5" width="4" height="15" fill="#000" stroke="#ff3232"/>
<line x1="996.5" y1="229" x2="996.5" y2="262" stroke="#54ffff"/>
<rect x="994" y="229" width="5" height="21" fill="#54ffff"/>
<line x1="1003.5" y1="244" x2="1003.5" y2="276" stroke="#54ffff"/>
<line x1="1001" y1="255.5" x2="1006" y2="255.5" stroke="#54ffff"/>
<line x1="1010.5" y1="253" x2="1010.5" y2="274" stroke="#54ffff"/>
<rect x="1008" y="262" width="5" height="4" fill="#54ffff"/>
<line x1="1017.5" y1="266" x2="1017.5" y2="316" stroke="#54ffff"/>
<rect x="1015" y="266" width="5" height="30" fill="#54ffff"/>
<line x1="1024.5" y1="301" x2="1024.5" y2="341" stroke="#54ffff"/>
<rect x="1022" y="301" width="5" height="18" fill="#54ffff"/>
<line x1="1031.5" y1="283" x2="1031.5" y2="284" stroke="#ff3232"/>
<rect x="1029.5" y="284.5" width="4" height="40" fill="#000" stroke="#ff3232"/>
<line x1="1038.5" y1="250" x2="1038.5" y2="273" stroke="#ff3232"/>
<line x1="1036" y1="273.5" x2="1041" y2="273.5" stroke="#ff3232"/>
<line x1="1045.5" y1="257" x2="1045.5" y2="260" stroke="#ff3232"/>
<line x1="1045.5" y1="272" x2="1045.5" y2="286" stroke="#ff3232"/>
<rect x="1043.5" y="260.5" width="4" height="12" fill="#000" stroke="#ff3232"/>
<line x1="1052.5" y1="253" x2="1052.5" y2="282" stroke="#54ffff"/>
<line x1="1050" y1="263.5" x2="1055" y2="263.5" stroke="#54ffff"/>
<line x1="1059.5" y1="261" x2="1059.5" y2="266" stroke="#ff3232"/>
<line x1="1059.5" y1="268" x2="1059.5" y2="296" stroke="#ff3232"/>
<rect x="1057.5" y="266.5" width="4" height="2" fill="#000" stroke="#ff3232"/>
<line x1="1066.5" y1="242" x2="1066.5" y2="268" stroke="#ff3232"/>
<line x1="1066.5" y1="270" x2="1066.5" y2="289" stroke="#ff3232"/>
<rect x="1064.5" y="268.5" width="4" height="2" fill="#000" stroke="#ff3232"/>
<line x1="1073.5" y1="221" x2="1073.5" y2="229" stroke="#ff3232"/>
<line x1="1073.5" y1="266" x2="1073.5" y2="268" stroke="#ff3232"/>
<rect x="1071.5" y="229.5" width="4" height="37" fill="#000" stroke="#ff3232"/>
<line x1="1080.5" y1="207" x2="1080.5" y2="242" stroke="#54ffff"/>
<rect x="1078" y="234" width="5" height="8" fill="#54ffff"/>
<line x1="1087.5" y1="224" x2="1087.5" y2="263" stroke="#54ffff"/>
<rect x="1085" y="235" width="5" height="24" fill="#54ffff"/>
<line x1="1094.5" y1="256" x2="1094.5" y2="304" stroke="#54ffff"/>
<line x1="1092" y1="304.5" x2="1097" y2="304.5" stroke="#54ffff"/>
<line x1="1101.5" y1="278" x2="1101.5" y2="286" stroke="#ff3232"/>
<line x1="1101.5" y1="308" x2="1101.5" y2="318" stroke="#ff3232"/>
<rect x="1099.5" y="286.5" width="4" height="22" fill="#000" stroke="#ff3232"/>
<line x1="1108.5" y1="266" x2="1108.5" y2="279" stroke="#ff3232"/>
<line x1="1108.5" y1="285" x2="1108.5" y2="294" stroke="#ff3232"/>
<rect x="1106.5" y="279.5" width="4" height="6" fill="#000" stroke="#ff3232"/>
<line x1="1115.5" y1="270" x2="1115.5" y2="288" stroke="#54ffff"/>
<line x1="1113" y1="279.5" x2="1118" y2="279.5" stroke="#54ffff"/>
<line x1="1122.5" y1="260" x2="1122.5" y2="263" stroke="#ff3232"/>
<line x1="1122.5" y1="279" x2="1122.5" y2="303" stroke="#ff3232"/>
<rect x="1120.5" y="263.5" width="4" height="16" fill="#000" stroke="#ff3232"/>
<line x1="1129.5" y1="235" x2="1129.5" y2="254" stroke="#ff3232"/>
<line x1="1129.5" y1="267" x2="1129.5" y2="270" stroke="#ff3232"/>
<rect x="1127.5" y="254.5" width="4" height="13" fill="#000" stroke="#ff3232"/>
<line x1="1134" y1="259.5" x2="1139" y2="259.5" stroke="#ff3232"/>
<line x1="5" y1="54.5" x2="1159" y2="54.5" stroke="#ffff00"/>
<line x1="5" y1="425.5" x2="1159" y2="425.5" stroke="#ffff00"/>
<line x1="5" y1="124.5" x2="1159" y2="124.5" stroke="#ffff00" stroke-dasharray="3 3"/>
<line x1="5" y1="195.5" x2="1159" y2="195.5" stroke="#ffff00" stroke-dasharray="3 3"/>
<line x1="5" y1="239.5" x2="1159" y2="239.5" stroke="#ffff00" stroke-dasharray="3 3"/>
<line x1="5" y1="282.5" x2="1159" y2="282.5" stroke="#ffff00" stroke-dasharray="3 3"/>
<polyline points="9.4,171.2 16.4,168.8 23.4,166.3 30.4,164.4 37.4,162.4 44.4,160.5 51.4,158.5 58.4,157.0 65.4,155.5 72.4,154.6 79.4,153.6 86.4,153.3 93.4,153.0 100.4,151.7 107.4,150.2 114.4,149.5 121.4,148.7 128.4,148.7 135.4,148.7 142.4,148.4 149.4,148.1 156.4,148.6 163.4,149.0 170.4,149.2 177.4,149.1 184.4,148.9 191.4,148.7 198.4,148.0 205.4,147.3 212.4,148.7 219.4,150.2 226.4,151.4 233.4,152.6 240.4,154.5 247.4,156.5 254.4,159.9 261.4,163.3 268.4,168.1 275.4,173.0 282.4,177.2 289.4,181.8 296.4,186.8 303.4,192.1 310.4,197.6 317.4,202.0 324.4,206.0 331.4,209.7 338.4,213.2 345.4,216.5 352.4,218.8 359.4,221.2 366.4,223.2 373.4,225.2 380.4,226.0 387.4,226.7 394.4,226.3 401.4,226.0 408.4,225.6 415.4,225.6 422.4,224.9 429.4,224.8 436.4,225.1 443.4,225.3 450.4,226.1 457.4,226.5 464.4,226.9 471.4,226.8 478.4,227.6 485.4,226.8 492.4,226.1 499.4,225.1 506.4,225.0 513.4,224.4 520.4,223.9 527.4,223.5 534.4,222.5 541.4,221.3 548.4,220.8 555.4,219.1 562.4,219.1 569.4,218.7 576.4,218.5 583.4,217.9 590.4,219.2 597.4,219.9 604.4,220.9 611.4,222.6 618.4,224.5 625.4,227.3 632.4,228.5 639.4,229.6 646.4,230.1 653.4,230.8 660.4,232.0 667.4,233.2 674.4,234.4 681.4,234.5 688.4,234.1 695.4,234.0 702.4,233.1 709.4,232.3 716.4,231.1 723.4,229.0 730.4,227.1 737.4,225.0 744.4,221.9 751.4,220.6 758.4,218.9 765.4,217.5 772.4,216.2 779.4,215.0 786.4,213.9 793.4,213.2 800.4,213.5 807.4,213.5 814.4,214.6 821.4,214.9 828.4,216.0 835.4,217.1 842.4,217.9 849.4,219.8 856.4,222.1 863.4,224.7 870.4,227.0 877.4,228.5 884.4,230.0 891.4,231.9 898.4,233.6 905.4,236.3 912.4,238.8 919.4,240.6 926.4,241.6 933.4,243.0 940.4,244.2 947.4,245.2 954.4,246.0 961.4,247.0 968.4,247.2 975.4,248.0 982.4,249.6 989.4,250.7 996.4,252.3 1003.4,254.2 1010.4,254.0 1017.4,255.3 1024.4,256.7 1031.4,256.8 1038.4,256.8 1045.4,256.3 1052.4,256.4 1059.4,256.8 1066.4,258.0 1073.4,258.4 1080.4,258.4 1087.4,258.8 1094.4,259.3 1101.4,259.8 1108.4,260.3 1115.4,260.5 1122.4,260.9 1129.4,260.4 1136.4,260.1" fill="none" stroke="#00e6e6" stroke-width="1"/>
<polyline points="9.4,129.1 16.4,130.5 23.4,132.0 30.4,134.0 37.4,136.0 44.4,139.9 51.4,146.5 58.4,153.6 65.4,158.5 72.4,163.3 79.4,168.7 86.4,174.1 93.4,180.0 100.4,183.0 107.4,185.8 114.4,189.2 121.4,189.5 128.4,189.7 135.4,190.7 142.4,189.5 149.4,187.8 156.4,186.0 163.4,184.5 170.4,183.2 177.4,180.5 184.4,178.0 191.4,176.5 198.4,174.0 205.4,171.0 212.4,170.1 219.4,171.1 226.4,171.7 233.4,172.6 240.4,174.7 247.4,175.8 254.4,176.7 261.4,179.1 268.4,183.9 275.4,187.0 282.4,191.4 289.4,195.8 296.4,201.6 303.4,207.6 310.4,213.4 317.4,219.9 324.4,225.6 331.4,231.9 338.4,239.0 345.4,243.7 352.4,249.7 359.4,254.7 366.4,259.7 373.4,264.8 380.4,267.6 387.4,271.7 394.4,274.4 401.4,276.3 408.4,277.8 415.4,280.1 422.4,279.8 429.4,278.6 436.4,278.5 443.4,278.0 450.4,277.5 457.4,277.2 464.4,277.0 471.4,274.6 478.4,271.3 485.4,266.7 492.4,260.8 499.4,254.4 506.4,248.4 513.4,241.2 520.4,234.4 527.4,227.0 534.4,219.3 541.4,210.7 548.4,202.5 555.4,194.6 562.4,188.5 569.4,182.7 576.4,177.2 583.4,171.1 590.4,170.8 597.4,168.1 604.4,167.4 611.4,169.0 618.4,171.2 625.4,174.5 632.4,177.2 639.4,180.6 646.4,181.7 653.4,183.5 660.4,186.6 667.4,189.2 674.4,191.8 681.4,194.5 688.4,196.9 695.4,201.3 702.4,205.4 709.4,210.2 716.4,213.8 723.4,216.7 730.4,219.9 737.4,222.9 744.4,224.5 751.4,230.5 758.4,235.3 765.4,240.3 772.4,243.9 779.4,247.3 786.4,250.6 793.4,255.3 800.4,256.3 807.4,258.9 814.4,261.7 821.4,260.9 828.4,260.9 835.4,259.6 842.4,258.7 849.4,259.1 856.4,262.5 863.4,266.0 870.4,267.5 877.4,267.8 884.4,268.1 891.4,269.3 898.4,270.4 905.4,271.3 912.4,272.2 919.4,271.1 926.4,269.4 933.4,269.3 940.4,268.6 947.4,267.4 954.4,267.6 961.4,263.4 968.4,259.1 975.4,255.7 982.4,255.2 989.4,254.1 996.4,254.0 1003.4,253.1 1010.4,251.8 1017.4,251.8 1024.4,251.8 1031.4,252.8 1038.4,252.8 1045.4,253.0 1052.4,254.1 1059.4,254.4 1066.4,253.4 1073.4,250.9 1080.4,249.4 1087.4,249.7 1094.4,250.6 1101.4,250.3 1108.4,250.2 1115.4,249.7 1122.4,249.6 1129.4,249.8 1136.4,250.7" fill="none" stroke="#00ff00" stroke-width="1"/>
<polyline points="9.4,175.1 16.4,181.0 23.4,185.8 30.4,186.5 37.4,187.2 44.4,188.5 51.4,189.7 58.4,188.8 65.4,187.8 72.4,186.8 79.4,185.8 86.4,186.6 93.4,187.4 100.4,185.0 107.4,182.9 114.4,180.5 121.4,178.0 128.4,173.1 135.4,171.0 142.4,169.3 149.4,170.6 156.4,171.9 163.4,173.9 170.4,178.8 177.4,180.6 184.4,180.8 191.4,180.6 198.4,182.2 205.4,179.2 212.4,180.5 219.4,179.7 226.4,178.8 233.4,176.0 240.4,174.2 247.4,172.5 254.4,170.8 261.4,175.6 268.4,181.6 275.4,185.2 282.4,192.4 289.4,200.0 296.4,209.3 303.4,220.4 310.4,229.2 317.4,240.5 324.4,251.8 331.4,260.2 338.4,270.5 345.4,281.5 352.4,288.7 359.4,296.1 366.4,303.9 373.4,312.2 380.4,318.1 387.4,324.4 394.4,327.4 401.4,326.5 408.4,323.1 415.4,318.9 422.4,313.1 429.4,303.8 436.4,294.2 443.4,281.7 450.4,270.3 457.4,258.4 464.4,247.9 471.4,239.7 478.4,230.0 485.4,219.7 492.4,209.0 499.4,199.5 506.4,192.2 513.4,185.0 520.4,179.5 527.4,173.5 534.4,169.2 541.4,161.9 548.4,157.6 555.4,153.3 562.4,151.8 569.4,152.4 576.4,152.0 583.4,151.8 590.4,158.0 597.4,160.8 604.4,163.0 611.4,168.0 618.4,173.0 625.4,180.6 632.4,187.7 639.4,193.1 646.4,194.1 653.4,195.1 660.4,198.5 667.4,201.7 674.4,206.7 681.4,215.3 688.4,221.5 695.4,229.7 702.4,234.4 709.4,240.7 716.4,247.0 723.4,253.5 730.4,253.1 737.4,255.7 744.4,254.7 751.4,254.1 758.4,253.8 765.4,252.1 772.4,252.0 779.4,252.6 786.4,255.4 793.4,259.5 800.4,262.6 807.4,265.4 814.4,267.8 821.4,267.6 828.4,269.0 835.4,268.2 842.4,267.6 849.4,266.4 856.4,267.3 863.4,268.9 870.4,269.9 877.4,269.0 884.4,272.1 891.4,273.5 898.4,274.2 905.4,276.1 912.4,276.7 919.4,276.3 926.4,275.3 933.4,274.5 940.4,271.7 947.4,268.5 954.4,263.6 961.4,257.9 968.4,251.1 975.4,246.2 982.4,246.7 989.4,245.0 996.4,242.6 1003.4,240.2 1010.4,239.1 1017.4,241.4 1024.4,243.4 1031.4,242.8 1038.4,242.5 1045.4,240.7 1052.4,240.6 1059.4,241.4 1066.4,243.2 1073.4,241.4 1080.4,241.0 1087.4,242.4 1094.4,246.6 1101.4,253.8 1108.4,260.9 1115.4,267.0 1122.4,268.2 1129.4,269.8 1136.4,270.3" fill="none" stroke="#ff80ff" stroke-width="1"/>
<polyline points="9.4,221.4 16.4,212.0 23.4,203.0 30.4,193.5 37.4,184.0 44.4,175.5 51.4,167.3 58.4,159.5 65.4,152.5 72.4,149.3 79.4,153.7 86.4,157.6 93.4,165.8 100.4,175.8 107.4,182.3 114.4,188.5 121.4,186.1 128.4,188.3 135.4,190.5 142.4,189.2 149.4,187.5 156.4,186.2 163.4,182.0 170.4,181.7 177.4,178.8 184.4,173.1 191.4,175.2 198.4,176.1 205.4,168.0 212.4,171.7 219.4,172.0 226.4,171.4 233.4,170.0 240.4,166.6 247.4,166.2 254.4,168.6 261.4,176.0 268.4,187.2 275.4,202.4 282.4,213.1 289.4,228.0 296.4,247.1 303.4,270.8 310.4,291.9 317.4,314.8 324.4,335.1 331.4,344.5 338.4,353.8 345.4,360.7 352.4,364.3 359.4,364.3 366.4,360.7 373.4,353.7 380.4,344.4 387.4,334.1 394.4,319.7 401.4,308.5 408.4,292.4 415.4,277.1 422.4,261.9 429.4,243.4 436.4,227.7 443.4,209.7 450.4,196.2 457.4,182.8 464.4,176.2 471.4,170.8 478.4,167.6 485.4,162.3 492.4,156.2 499.4,155.5 506.4,156.7 513.4,160.3 520.4,162.8 527.4,164.2 534.4,162.1 541.4,152.9 548.4,147.5 555.4,144.3 562.4,147.5 569.4,149.2 576.4,147.3 583.4,143.3 590.4,153.3 597.4,157.4 604.4,164.0 611.4,183.2 618.4,198.5 625.4,216.9 632.4,227.8 639.4,236.9 646.4,241.0 653.4,246.9 660.4,243.6 667.4,245.9 674.4,249.4 681.4,247.4 688.4,244.6 695.4,242.5 702.4,241.0 709.4,244.6 716.4,253.1 723.4,260.0 730.4,262.6 737.4,265.4 744.4,260.0 751.4,260.9 758.4,262.9 765.4,261.6 772.4,263.0 779.4,260.5 786.4,257.7 793.4,258.9 800.4,262.6 807.4,265.3 814.4,275.6 821.4,274.4 828.4,275.0 835.4,274.7 842.4,272.2 849.4,272.4 856.4,276.9 863.4,278.9 870.4,277.2 877.4,272.7 884.4,268.6 891.4,272.7 898.4,273.3 905.4,277.5 912.4,281.3 919.4,280.3 926.4,273.7 933.4,270.1 940.4,266.2 947.4,264.3 954.4,258.6 961.4,243.1 968.4,228.8 975.4,214.9 982.4,212.2 989.4,209.7 996.4,211.5 1003.4,210.4 1010.4,211.9 1017.4,218.5 1024.4,228.3 1031.4,242.5 1038.4,256.2 1045.4,266.6 1052.4,268.9 1059.4,273.1 1066.4,274.9 1073.4,272.4 1080.4,270.0 1087.4,266.4 1094.4,264.9 1101.4,265.1 1108.4,265.7 1115.4,267.5 1122.4,267.6 1129.4,266.4 1136.4,265.6" fill="none" stroke="#ffff00" stroke-width="1"/>
<polyline points="9.4,210.0 16.4,190.0 23.4,170.0 30.4,144.0 37.4,133.9 44.4,137.5 51.4,144.9 58.4,144.1 65.4,160.0 72.4,164.7 79.4,170.0 86.4,170.2 93.4,187.6 100.4,191.5 107.4,199.9 114.4,206.9 121.4,201.9 128.4,189.0 135.4,189.5 142.4,178.6 149.4,168.1 156.4,170.5 163.4,174.9 170.4,174.0 177.4,179.1 184.4,178.1 191.4,179.8 198.4,177.2 205.4,162.0 212.4,164.2 219.4,165.8 226.4,163.0 233.4,162.8 240.4,171.2 247.4,168.1 254.4,171.3 261.4,189.0 268.4,211.7 275.4,233.7 282.4,258.2 289.4,284.6 296.4,305.2 303.4,329.8 310.4,350.1 317.4,371.4 324.4,385.6 331.4,383.8 338.4,377.9 345.4,371.3 352.4,357.2 359.4,343.0 366.4,337.6 373.4,329.4 380.4,317.5 387.4,311.0 394.4,296.4 401.4,279.3 408.4,255.5 415.4,236.7 422.4,212.8 429.4,190.4 436.4,176.1 443.4,163.8 450.4,155.7 457.4,152.8 464.4,162.0 471.4,165.5 478.4,171.4 485.4,168.9 492.4,159.6 499.4,149.0 506.4,147.9 513.4,149.2 520.4,156.6 527.4,168.8 534.4,175.2 541.4,157.8 548.4,145.8 555.4,132.1 562.4,126.2 569.4,123.3 576.4,136.7 583.4,140.7 590.4,174.6 597.4,188.7 604.4,204.7 611.4,229.7 618.4,256.2 625.4,259.2 632.4,267.0 639.4,269.1 646.4,252.3 653.4,237.6 660.4,228.0 667.4,224.8 674.4,229.7 681.4,242.6 688.4,251.7 695.4,257.0 702.4,257.1 709.4,259.4 716.4,263.6 723.4,268.4 730.4,268.2 737.4,273.8 744.4,260.7 751.4,258.1 758.4,257.5 765.4,254.9 772.4,252.3 779.4,260.4 786.4,257.3 793.4,260.4 800.4,270.2 807.4,278.2 814.4,290.7 821.4,291.6 828.4,289.7 835.4,279.3 842.4,266.1 849.4,254.0 856.4,262.2 863.4,268.2 870.4,275.1 877.4,279.3 884.4,283.2 891.4,283.2 898.4,278.5 905.4,279.8 912.4,283.2 919.4,277.3 926.4,264.2 933.4,261.7 940.4,252.5 947.4,245.4 954.4,239.8 961.4,222.0 968.4,196.0 975.4,177.2 982.4,179.0 989.4,179.7 996.4,201.1 1003.4,224.7 1010.4,246.7 1017.4,258.0 1024.4,277.0 1031.4,283.9 1038.4,287.6 1045.4,286.4 1052.4,279.9 1059.4,269.3 1066.4,266.0 1073.4,257.2 1080.4,253.6 1087.4,252.9 1094.4,260.6 1101.4,264.3 1108.4,274.1 1115.4,281.4 1122.4,282.2 1129.4,272.3 1136.4,267.0" fill="none" stroke="#ffffff" stroke-width="1"/>
<polyline points="9.4,549.6 16.4,537.7 23.4,527.8 30.4,519.9 37.4,515.5 44.4,514.2 51.4,515.5 58.4,516.7 65.4,524.1 72.4,530.3 79.4,537.2 86.4,543.4 93.4,548.8 100.4,551.8 107.4,553.3 114.4,556.7 121.4,555.1 128.4,547.6 135.4,544.8 142.4,539.3 149.4,535.9 156.4,533.0 163.4,531.5 170.4,533.2 177.4,533.6 184.4,534.3 191.4,535.4 198.4,535.1 205.4,531.6 212.4,533.1 219.4,536.4 226.4,538.3 233.4,539.3 240.4,540.8 247.4,542.4 254.4,546.3 261.4,551.1 268.4,555.9 275.4,559.6 282.4,563.3 289.4,567.6 296.4,570.8 303.4,574.1 310.4,575.2 317.4,575.7 324.4,575.6 331.4,571.8 338.4,567.6 345.4,561.7 352.4,551.9 359.4,542.5 366.4,533.7 373.4,527.0 380.4,520.8 387.4,516.1 394.4,511.5 401.4,508.4 408.4,505.9 415.4,505.2 422.4,504.5 429.4,503.0 436.4,502.5 443.4,502.5 450.4,503.1 457.4,505.1 464.4,510.9 471.4,518.3 478.4,526.2 485.4,528.8 492.4,527.2 499.4,526.5 506.4,530.3 513.4,536.2 520.4,541.8 527.4,546.6 534.4,548.7 541.4,544.5 548.4,541.1 555.4,537.5 562.4,536.6 569.4,537.6 576.4,539.3 583.4,540.4 590.4,546.1 597.4,550.3 604.4,554.1 611.4,559.4 618.4,563.2 625.4,566.0 632.4,566.3 639.4,564.9 646.4,559.6 653.4,551.4 660.4,546.0 667.4,542.0 674.4,541.4 681.4,541.6 688.4,542.6 695.4,546.2 702.4,547.6 709.4,550.4 716.4,553.2 723.4,552.7 730.4,550.8 737.4,548.2 744.4,541.9 751.4,539.3 758.4,538.4 765.4,537.6 772.4,536.6 779.4,535.9 786.4,536.5 793.4,541.2 800.4,547.9 807.4,553.3 814.4,558.5 821.4,557.5 828.4,555.3 835.4,551.1 842.4,542.7 849.4,536.5 856.4,536.1 863.4,538.9 870.4,541.4 877.4,539.4 884.4,539.5 891.4,543.0 898.4,545.4 905.4,548.6 912.4,546.9 919.4,541.3 926.4,536.4 933.4,535.8 940.4,535.7 947.4,533.7 954.4,530.3 961.4,525.1 968.4,519.3 975.4,515.3 982.4,519.2 989.4,524.9 996.4,533.4 1003.4,541.6 1010.4,549.6 1017.4,556.2 1024.4,561.4 1031.4,563.8 1038.4,563.5 1045.4,558.8 1052.4,552.5 1059.4,545.3 1066.4,538.8 1073.4,531.3 1080.4,526.4 1087.4,525.0 1094.4,531.4 1101.4,537.4 1108.4,541.8 1115.4,545.1 1122.4,546.0 1129.4,544.9 1136.4,543.5" fill="none" stroke="#54ffff" stroke-width="1"/>
<polyline points="9.4,527.8 16.4,516.7 23.4,508.8 30.4,503.1 37.4,505.6 44.4,511.8 51.4,518.0 58.4,519.2 65.4,537.7 72.4,541.4 79.4,550.1 86.4,553.8 93.4,561.7 100.4,558.7 107.4,556.7 114.4,562.4 121.4,546.8 128.4,532.6 135.4,539.3 142.4,528.1 149.4,529.1 156.4,527.3 163.4,528.4 170.4,536.7 177.4,534.5 184.4,535.5 191.4,537.7 198.4,534.6 205.4,524.5 212.4,536.2 219.4,543.0 226.4,542.0 233.4,541.4 240.4,543.9 247.4,545.5 254.4,554.0 261.4,560.8 268.4,565.4 275.4,567.1 282.4,570.6 289.4,576.3 296.4,577.2 303.4,580.7 310.4,577.3 317.4,576.6 324.4,575.4 331.4,564.1 338.4,559.3 345.4,549.8 352.4,532.4 359.4,523.6 366.4,516.2 373.4,513.5 380.4,508.3 387.4,506.7 394.4,502.2 401.4,502.4 408.4,500.7 415.4,504.0 422.4,503.1 429.4,499.9 436.4,501.5 443.4,502.5 450.4,504.2 457.4,509.1 464.4,522.6 471.4,533.1 478.4,542.0 485.4,533.8 492.4,524.2 499.4,525.1 506.4,537.8 513.4,548.0 520.4,553.2 527.4,556.2 534.4,552.8 541.4,536.2 548.4,534.2 555.4,530.2 562.4,534.8 569.4,539.6 576.4,542.8 583.4,542.5 590.4,557.5 597.4,558.8 604.4,561.7 611.4,569.8 618.4,570.8 625.4,571.7 632.4,566.8 639.4,562.0 646.4,549.1 653.4,535.0 660.4,535.1 667.4,534.1 674.4,540.2 681.4,542.0 688.4,544.5 695.4,553.5 702.4,550.4 709.4,555.8 716.4,558.9 723.4,551.7 730.4,546.9 737.4,542.9 744.4,529.5 751.4,533.9 758.4,536.6 765.4,536.0 772.4,534.7 779.4,534.4 786.4,537.8 793.4,550.6 800.4,561.1 807.4,564.0 814.4,569.1 821.4,555.4 828.4,550.8 835.4,542.7 842.4,525.9 849.4,524.1 856.4,535.3 863.4,544.6 870.4,546.4 877.4,535.3 884.4,539.8 891.4,550.0 898.4,550.3 905.4,555.0 912.4,543.4 919.4,530.2 926.4,526.5 933.4,534.8 940.4,535.3 947.4,529.7 954.4,523.5 961.4,514.7 968.4,507.6 975.4,507.5 982.4,527.0 989.4,536.4 996.4,550.4 1003.4,558.0 1010.4,565.5 1017.4,569.4 1024.4,572.0 1031.4,568.4 1038.4,562.8 1045.4,549.6 1052.4,539.9 1059.4,530.8 1066.4,525.8 1073.4,516.4 1080.4,516.4 1087.4,522.4 1094.4,544.1 1101.4,549.4 1108.4,550.7 1115.4,551.7 1122.4,547.8 1129.4,542.6 1136.4,540.6" fill="none" stroke="#ffff80" stroke-width="1"/>
<polyline points="9.4,482.1 16.4,474.7 23.4,470.5 30.4,470.5 37.4,485.8 44.4,510.5 51.4,523.6 58.4,522.4 65.4,566.1 72.4,564.2 79.4,578.0 86.4,574.3 93.4,587.1 100.4,573.5 107.4,561.2 114.4,573.1 121.4,530.2 128.4,502.7 135.4,528.4 142.4,505.7 149.4,515.6 156.4,515.9 163.4,522.1 170.4,543.7 177.4,536.1 184.4,537.9 191.4,542.2 198.4,533.5 205.4,510.4 212.4,542.3 219.4,556.1 226.4,549.5 233.4,545.6 240.4,550.0 247.4,551.8 254.4,569.5 261.4,580.3 268.4,584.5 275.4,581.9 282.4,585.3 289.4,593.6 296.4,590.0 303.4,593.8 310.4,581.7 317.4,578.6 324.4,575.0 331.4,548.9 338.4,542.7 345.4,526.2 352.4,493.2 359.4,485.9 366.4,481.1 373.4,486.5 380.4,483.5 387.4,488.0 394.4,483.7 401.4,490.2 408.4,490.5 415.4,501.5 422.4,500.3 429.4,493.7 436.4,499.5 443.4,502.6 450.4,506.4 457.4,517.2 464.4,546.1 471.4,562.7 478.4,573.7 485.4,543.9 492.4,518.1 499.4,522.3 506.4,552.7 513.4,571.7 520.4,575.8 527.4,575.2 534.4,561.1 541.4,519.5 548.4,520.5 555.4,515.6 562.4,531.3 569.4,543.7 576.4,549.8 583.4,546.7 590.4,580.4 597.4,575.8 604.4,576.7 611.4,590.8 618.4,586.0 625.4,583.2 632.4,567.9 639.4,556.3 646.4,528.1 653.4,502.1 660.4,513.5 667.4,518.2 674.4,537.8 681.4,542.8 688.4,548.5 695.4,568.1 702.4,556.1 709.4,566.7 716.4,570.3 723.4,549.8 730.4,539.2 737.4,532.3 744.4,504.6 751.4,523.2 758.4,533.1 765.4,532.8 772.4,530.9 779.4,531.5 786.4,540.4 793.4,569.3 800.4,587.6 807.4,585.6 814.4,590.2 821.4,551.1 828.4,541.9 835.4,526.0 842.4,492.4 849.4,499.3 856.4,533.6 863.4,555.9 870.4,556.5 877.4,527.2 884.4,540.3 891.4,564.0 898.4,560.0 905.4,567.8 912.4,536.5 919.4,507.9 926.4,506.7 933.4,532.6 940.4,534.7 947.4,521.7 954.4,509.9 961.4,493.8 968.4,484.4 975.4,491.7 982.4,542.5 989.4,559.2 996.4,584.3 1003.4,590.8 1010.4,597.3 1017.4,595.7 1024.4,593.1 1031.4,577.7 1038.4,561.6 1045.4,531.0 1052.4,514.6 1059.4,501.9 1066.4,499.9 1073.4,486.6 1080.4,496.5 1087.4,517.0 1094.4,569.5 1101.4,573.4 1108.4,568.5 1115.4,564.9 1122.4,551.4 1129.4,538.1 1136.4,534.9" fill="none" stroke="#ff80ff" stroke-width="1"/>
<line x1="9.5" y1="695.0" x2="9.5" y2="694.7" stroke="#00ff00"/>
<line x1="16.5" y1="695.0" x2="16.5" y2="679.8" stroke="#ff3232"/>
<line x1="23.5" y1="695.0" x2="23.5" y2="669.0" stroke="#ff3232"/>
<line x1="30.5" y1="695.0" x2="30.5" y2="657.5" stroke="#ff3232"/>
<line x1="37.5" y1="695.0" x2="37.5" y2="657.7" stroke="#ff3232"/>
<line x1="44.5" y1="695.0" x2="44.5" y2="665.6" stroke="#ff3232"/>
<line x1="51.5" y1="695.0" x2="51.5" y2="674.1" stroke="#ff3232"/>
<line x1="58.5" y1="695.0" x2="58.5" y2="670.8" stroke="#ff3232"/>
<line x1="65.5" y1="695.0" x2="65.5" y2="680.1" stroke="#ff3232"/>
<line x1="72.5" y1="695.0" x2="72.5" y2="681.8" stroke="#ff3232"/>
<line x1="79.5" y1="695.0" x2="79.5" y2="690.1" stroke="#ff3232"/>
<line x1="86.5" y1="695.0" x2="86.5" y2="692.9" stroke="#ff3232"/>
<line x1="93.5" y1="695.0" x2="93.5" y2="701.6" stroke="#00ff00"/>
<line x1="100.5" y1="695.0" x2="100.5" y2="704.0" stroke="#00ff00"/>
<line x1="107.5" y1="695.0" x2="107.5" y2="704.4" stroke="#00ff00"/>
<line x1="114.5" y1="695.0" x2="114.5" y2="709.3" stroke="#00ff00"/>
<line x1="121.5" y1="695.0" x2="121.5" y2="697.6" stroke="#00ff00"/>
<line x1="128.5" y1="695.0" x2="128.5" y2="689.2" stroke="#ff3232"/>
<line x1="135.5" y1="695.0" x2="135.5" y2="694.2" stroke="#ff3232"/>
<line x1="142.5" y1="695.0" x2="142.5" y2="685.8" stroke="#ff3232"/>
<line x1="149.5" y1="695.0" x2="149.5" y2="686.8" stroke="#ff3232"/>
<line x1="156.5" y1="695.0" x2="156.5" y2="685.9" stroke="#ff3232"/>
<line x1="163.5" y1="695.0" x2="163.5" y2="686.9" stroke="#ff3232"/>
<line x1="170.5" y1="695.0" x2="170.5" y2="693.0" stroke="#ff3232"/>
<line x1="177.5" y1="695.0" x2="177.5" y2="691.2" stroke="#ff3232"/>
<line x1="184.5" y1="695.0" x2="184.5" y2="690.2" stroke="#ff3232"/>
<line x1="191.5" y1="695.0" x2="191.5" y2="690.5" stroke="#ff3232"/>
<line x1="198.5" y1="695.0" x2="198.5" y2="688.0" stroke="#ff3232"/>
<line x1="205.5" y1="695.0" x2="205.5" y2="679.9" stroke="#ff3232"/>
<line x1="212.5" y1="695.0" x2="212.5" y2="686.5" stroke="#ff3232"/>
<line x1="219.5" y1="695.0" x2="219.5" y2="690.5" stroke="#ff3232"/>
<line x1="226.5" y1="695.0" x2="226.5" y2="689.9" stroke="#ff3232"/>
<line x1="233.5" y1="695.0" x2="233.5" y2="689.3" stroke="#ff3232"/>
<line x1="240.5" y1="695.0" x2="240.5" y2="690.7" stroke="#ff3232"/>
<line x1="247.5" y1="695.0" x2="247.5" y2="691.8" stroke="#ff3232"/>
<line x1="254.5" y1="695.0" x2="254.5" y2="698.1" stroke="#00ff00"/>
<line x1="261.5" y1="695.0" x2="261.5" y2="712.4" stroke="#00ff00"/>
<line x1="268.5" y1="695.0" x2="268.5" y2="724.6" stroke="#00ff00"/>
<line x1="275.5" y1="695.0" x2="275.5" y2="731.4" stroke="#00ff00"/>
<line x1="282.5" y1="695.0" x2="282.5" y2="736.0" stroke="#00ff00"/>
<line x1="289.5" y1="695.0" x2="289.5" y2="743.7" stroke="#00ff00"/>
<line x1="296.5" y1="695.0" x2="296.5" y2="750.4" stroke="#00ff00"/>
<line x1="303.5" y1="695.0" x2="303.5" y2="759.4" stroke="#00ff00"/>
<line x1="310.5" y1="695.0" x2="310.5" y2="757.6" stroke="#00ff00"/>
<line x1="317.5" y1="695.0" x2="317.5" y2="755.8" stroke="#00ff00"/>
<line x1="324.5" y1="695.0" x2="324.5" y2="750.9" stroke="#00ff00"/>
<line x1="331.5" y1="695.0" x2="331.5" y2="733.6" stroke="#00ff00"/>
<line x1="338.5" y1="695.0" x2="338.5" y2="723.7" stroke="#00ff00"/>
<line x1="345.5" y1="695.0" x2="345.5" y2="710.8" stroke="#00ff00"/>
<line x1="352.5" y1="695.0" x2="352.5" y2="697.0" stroke="#00ff00"/>
<line x1="359.5" y1="695.0" x2="359.5" y2="687.1" stroke="#ff3232"/>
<line x1="366.5" y1="695.0" x2="366.5" y2="678.2" stroke="#ff3232"/>
<line x1="373.5" y1="695.0" x2="373.5" y2="673.9" stroke="#ff3232"/>
<line x1="380.5" y1="695.0" x2="380.5" y2="663.5" stroke="#ff3232"/>
<line x1="387.5" y1="695.0" x2="387.5" y2="659.0" stroke="#ff3232"/>
<line x1="394.5" y1="695.0" x2="394.5" y2="649.7" stroke="#ff3232"/>
<line x1="401.5" y1="695.0" x2="401.5" y2="641.0" stroke="#ff3232"/>
<line x1="408.5" y1="695.0" x2="408.5" y2="632.7" stroke="#ff3232"/>
<line x1="415.5" y1="695.0" x2="415.5" y2="627.3" stroke="#ff3232"/>
<line x1="422.5" y1="695.0" x2="422.5" y2="623.7" stroke="#ff3232"/>
<line x1="429.5" y1="695.0" x2="429.5" y2="618.8" stroke="#ff3232"/>
<line x1="436.5" y1="695.0" x2="436.5" y2="623.0" stroke="#ff3232"/>
<line x1="443.5" y1="695.0" x2="443.5" y2="626.4" stroke="#ff3232"/>
<line x1="450.5" y1="695.0" x2="450.5" y2="633.4" stroke="#ff3232"/>
<line x1="457.5" y1="695.0" x2="457.5" y2="643.0" stroke="#ff3232"/>
<line x1="464.5" y1="695.0" x2="464.5" y2="657.6" stroke="#ff3232"/>
<line x1="471.5" y1="695.0" x2="471.5" y2="667.3" stroke="#ff3232"/>
<line x1="478.5" y1="695.0" x2="478.5" y2="674.6" stroke="#ff3232"/>
<line x1="485.5" y1="695.0" x2="485.5" y2="674.0" stroke="#ff3232"/>
<line x1="492.5" y1="695.0" x2="492.5" y2="670.6" stroke="#ff3232"/>
<line x1="499.5" y1="695.0" x2="499.5" y2="674.8" stroke="#ff3232"/>
<line x1="506.5" y1="695.0" x2="506.5" y2="686.2" stroke="#ff3232"/>
<line x1="513.5" y1="695.0" x2="513.5" y2="696.1" stroke="#00ff00"/>
<line x1="520.5" y1="695.0" x2="520.5" y2="702.0" stroke="#00ff00"/>
<line x1="527.5" y1="695.0" x2="527.5" y2="705.8" stroke="#00ff00"/>
<line x1="534.5" y1="695.0" x2="534.5" y2="707.2" stroke="#00ff00"/>
<line x1="541.5" y1="695.0" x2="541.5" y2="692.5" stroke="#ff3232"/>
<line x1="548.5" y1="695.0" x2="548.5" y2="690.7" stroke="#ff3232"/>
<line x1="555.5" y1="695.0" x2="555.5" y2="687.8" stroke="#ff3232"/>
<line x1="562.5" y1="695.0" x2="562.5" y2="694.4" stroke="#ff3232"/>
<line x1="569.5" y1="695.0" x2="569.5" y2="700.9" stroke="#00ff00"/>
<line x1="576.5" y1="695.0" x2="576.5" y2="705.4" stroke="#00ff00"/>
<line x1="583.5" y1="695.0" x2="583.5" y2="705.9" stroke="#00ff00"/>
<line x1="590.5" y1="695.0" x2="590.5" y2="732.0" stroke="#00ff00"/>
<line x1="597.5" y1="695.0" x2="597.5" y2="735.5" stroke="#00ff00"/>
<line x1="604.5" y1="695.0" x2="604.5" y2="739.4" stroke="#00ff00"/>
<line x1="611.5" y1="695.0" x2="611.5" y2="748.5" stroke="#00ff00"/>
<line x1="618.5" y1="695.0" x2="618.5" y2="750.7" stroke="#00ff00"/>
<line x1="625.5" y1="695.0" x2="625.5" y2="752.5" stroke="#00ff00"/>
<line x1="632.5" y1="695.0" x2="632.5" y2="743.8" stroke="#00ff00"/>
<line x1="639.5" y1="695.0" x2="639.5" y2="733.6" stroke="#00ff00"/>
<line x1="646.5" y1="695.0" x2="646.5" y2="715.6" stroke="#00ff00"/>
<line x1="653.5" y1="695.0" x2="653.5" y2="704.0" stroke="#00ff00"/>
<line x1="660.5" y1="695.0" x2="660.5" y2="704.2" stroke="#00ff00"/>
<line x1="667.5" y1="695.0" x2="667.5" y2="702.5" stroke="#00ff00"/>
<line x1="674.5" y1="695.0" x2="674.5" y2="706.6" stroke="#00ff00"/>
<line x1="681.5" y1="695.0" x2="681.5" y2="706.3" stroke="#00ff00"/>
<line x1="688.5" y1="695.0" x2="688.5" y2="702.6" stroke="#00ff00"/>
<line x1="695.5" y1="695.0" x2="695.5" y2="704.1" stroke="#00ff00"/>
<line x1="702.5" y1="695.0" x2="702.5" y2="698.3" stroke="#00ff00"/>
<line x1="709.5" y1="695.0" x2="709.5" y2="701.9" stroke="#00ff00"/>
<line x1="716.5" y1="695.0" x2="716.5" y2="703.3" stroke="#00ff00"/>
<line x1="723.5" y1="695.0" x2="723.5" y2="701.2" stroke="#00ff00"/>
<line x1="730.5" y1="695.0" x2="730.5" y2="699.2" stroke="#00ff00"/>
<line x1="737.5" y1="695.0" x2="737.5" y2="696.6" stroke="#00ff00"/>
<line x1="744.5" y1="695.0" x2="744.5" y2="684.6" stroke="#ff3232"/>
<line x1="751.5" y1="695.0" x2="751.5" y2="687.1" stroke="#ff3232"/>
<line x1="758.5" y1="695.0" x2="758.5" y2="688.4" stroke="#ff3232"/>
<line x1="765.5" y1="695.0" x2="765.5" y2="687.3" stroke="#ff3232"/>
<line x1="772.5" y1="695.0" x2="772.5" y2="686.0" stroke="#ff3232"/>
<line x1="779.5" y1="695.0" x2="779.5" y2="685.6" stroke="#ff3232"/>
<line x1="786.5" y1="695.0" x2="786.5" y2="684.7" stroke="#ff3232"/>
<line x1="793.5" y1="695.0" x2="793.5" y2="690.1" stroke="#ff3232"/>
<line x1="800.5" y1="695.0" x2="800.5" y2="698.0" stroke="#00ff00"/>
<line x1="807.5" y1="695.0" x2="807.5" y2="700.0" stroke="#00ff00"/>
<line x1="814.5" y1="695.0" x2="814.5" y2="705.3" stroke="#00ff00"/>
<line x1="821.5" y1="695.0" x2="821.5" y2="695.8" stroke="#00ff00"/>
<line x1="828.5" y1="695.0" x2="828.5" y2="692.6" stroke="#ff3232"/>
<line x1="835.5" y1="695.0" x2="835.5" y2="686.8" stroke="#ff3232"/>
<line x1="842.5" y1="695.0" x2="842.5" y2="678.3" stroke="#ff3232"/>
<line x1="849.5" y1="695.0" x2="849.5" y2="679.1" stroke="#ff3232"/>
<line x1="856.5" y1="695.0" x2="856.5" y2="687.5" stroke="#ff3232"/>
<line x1="863.5" y1="695.0" x2="863.5" y2="694.1" stroke="#ff3232"/>
<line x1="870.5" y1="695.0" x2="870.5" y2="695.3" stroke="#00ff00"/>
<line x1="877.5" y1="695.0" x2="877.5" y2="688.2" stroke="#ff3232"/>
<line x1="884.5" y1="695.0" x2="884.5" y2="689.2" stroke="#ff3232"/>
<line x1="891.5" y1="695.0" x2="891.5" y2="693.4" stroke="#ff3232"/>
<line x1="898.5" y1="695.0" x2="898.5" y2="692.7" stroke="#ff3232"/>
<line x1="905.5" y1="695.0" x2="905.5" y2="695.2" stroke="#00ff00"/>
<line x1="912.5" y1="695.0" x2="912.5" y2="690.9" stroke="#ff3232"/>
<line x1="919.5" y1="695.0" x2="919.5" y2="684.7" stroke="#ff3232"/>
<line x1="926.5" y1="695.0" x2="926.5" y2="677.8" stroke="#ff3232"/>
<line x1="933.5" y1="695.0" x2="933.5" y2="681.0" stroke="#ff3232"/>
<line x1="940.5" y1="695.0" x2="940.5" y2="680.5" stroke="#ff3232"/>
<line x1="947.5" y1="695.0" x2="947.5" y2="677.0" stroke="#ff3232"/>
<line x1="954.5" y1="695.0" x2="954.5" y2="673.7" stroke="#ff3232"/>
<line x1="961.5" y1="695.0" x2="961.5" y2="658.0" stroke="#ff3232"/>
<line x1="968.5" y1="695.0" x2="968.5" y2="648.9" stroke="#ff3232"/>
<line x1="975.5" y1="695.0" x2="975.5" y2="649.6" stroke="#ff3232"/>
<line x1="982.5" y1="695.0" x2="982.5" y2="668.4" stroke="#ff3232"/>
<line x1="989.5" y1="695.0" x2="989.5" y2="678.9" stroke="#ff3232"/>
<line x1="996.5" y1="695.0" x2="996.5" y2="691.6" stroke="#ff3232"/>
<line x1="1003.5" y1="695.0" x2="1003.5" y2="701.1" stroke="#00ff00"/>
<line x1="1010.5" y1="695.0" x2="1010.5" y2="709.2" stroke="#00ff00"/>
<line x1="1017.5" y1="695.0" x2="1017.5" y2="719.5" stroke="#00ff00"/>
<line x1="1024.5" y1="695.0" x2="1024.5" y2="729.2" stroke="#00ff00"/>
<line x1="1031.5" y1="695.0" x2="1031.5" y2="727.1" stroke="#00ff00"/>
<line x1="1038.5" y1="695.0" x2="1038.5" y2="722.2" stroke="#00ff00"/>
<line x1="1045.5" y1="695.0" x2="1045.5" y2="715.2" stroke="#00ff00"/>
<line x1="1052.5" y1="695.0" x2="1052.5" y2="710.3" stroke="#00ff00"/>
<line x1="1059.5" y1="695.0" x2="1059.5" y2="706.8" stroke="#00ff00"/>
<line x1="1066.5" y1="695.0" x2="1066.5" y2="704.3" stroke="#00ff00"/>
<line x1="1073.5" y1="695.0" x2="1073.5" y2="694.9" stroke="#00ff00"/>
<line x1="1080.5" y1="695.0" x2="1080.5" y2="691.3" stroke="#ff3232"/>
<line x1="1087.5" y1="695.0" x2="1087.5" y2="692.4" stroke="#ff3232"/>
<line x1="1094.5" y1="695.0" x2="1094.5" y2="701.6" stroke="#00ff00"/>
<line x1="1101.5" y1="695.0" x2="1101.5" y2="703.6" stroke="#00ff00"/>
<line x1="1108.5" y1="695.0" x2="1108.5" y2="702.7" stroke="#00ff00"/>
<line x1="1115.5" y1="695.0" x2="1115.5" y2="701.7" stroke="#00ff00"/>
<line x1="1122.5" y1="695.0" x2="1122.5" y2="697.6" stroke="#00ff00"/>
<line x1="1129.5" y1="695.0" x2="1129.5" y2="693.0" stroke="#ff3232"/>
<line x1="1136.5" y1="695.0" x2="1136.5" y2="691.0" stroke="#ff3232"/>
<polyline points="9.4,726.4 16.4,724.6 23.4,721.4 30.4,716.8 37.4,712.2 44.4,708.5 51.4,706.0 58.4,703.0 65.4,701.2 72.4,699.6 79.4,699.1 86.4,698.9 93.4,699.8 100.4,701.0 107.4,702.2 114.4,704.1 121.4,704.4 128.4,703.8 135.4,703.7 142.4,702.7 149.4,701.7 156.4,700.6 163.4,699.7 170.4,699.5 177.4,699.1 184.4,698.5 191.4,698.0 198.4,697.2 205.4,695.4 212.4,694.4 219.4,693.9 226.4,693.3 233.4,692.7 240.4,692.2 247.4,691.8 254.4,692.3 261.4,694.5 268.4,698.3 275.4,702.9 282.4,708.1 289.4,714.2 296.4,721.2 303.4,729.3 310.4,737.2 317.4,744.9 324.4,751.9 331.4,756.8 338.4,760.5 345.4,762.5 352.4,762.8 359.4,761.9 366.4,759.9 373.4,757.3 380.4,753.4 387.4,749.0 394.4,743.4 401.4,736.7 408.4,729.0 415.4,720.6 422.4,711.7 429.4,702.3 436.4,693.3 443.4,684.8 450.4,677.2 457.4,670.7 464.4,666.1 471.4,662.7 478.4,660.2 485.4,657.7 492.4,654.7 499.4,652.2 506.4,651.2 513.4,651.4 520.4,652.3 527.4,653.7 534.4,655.3 541.4,655.1 548.4,654.6 555.4,653.8 562.4,653.7 569.4,654.5 576.4,655.9 583.4,657.3 590.4,662.0 597.4,667.1 604.4,672.7 611.4,679.5 618.4,686.5 625.4,693.8 632.4,699.9 639.4,704.8 646.4,707.5 653.4,708.6 660.4,709.9 667.4,710.9 674.4,712.4 681.4,713.9 688.4,714.9 695.4,716.1 702.4,716.5 709.4,717.5 716.4,718.6 723.4,719.4 730.4,720.0 737.4,720.3 744.4,719.0 751.4,718.1 758.4,717.3 765.4,716.4 772.4,715.4 779.4,714.3 786.4,713.0 793.4,712.5 800.4,712.9 807.4,713.6 814.4,715.0 821.4,715.1 828.4,714.9 835.4,714.0 842.4,711.9 849.4,710.0 856.4,709.1 863.4,709.1 870.4,709.2 877.4,708.4 884.4,707.7 891.4,707.6 898.4,707.4 905.4,707.5 912.4,707.0 919.4,705.8 926.4,703.7 933.4,702.0 940.4,700.3 947.4,698.1 954.4,695.5 961.4,690.9 968.4,685.2 975.4,679.6 982.4,676.3 989.4,674.4 996.4,674.0 1003.4,674.9 1010.4,676.7 1017.4,679.8 1024.4,684.2 1031.4,688.2 1038.4,691.7 1045.4,694.3 1052.4,696.3 1059.4,697.8 1066.4,699.0 1073.4,699.1 1080.4,698.7 1087.4,698.4 1094.4,699.3 1101.4,700.4 1108.4,701.5 1115.4,702.4 1122.4,702.8 1129.4,702.6 1136.4,702.1" fill="none" stroke="#ffff00" stroke-width="1"/>
<polyline points="9.4,726.5 16.4,717.2 23.4,708.6 30.4,698.3 37.4,693.8 44.4,694.1 51.4,695.8 58.4,691.2 65.4,694.0 72.4,693.3 79.4,696.9 86.4,698.1 93.4,703.3 100.4,705.7 107.4,707.2 114.4,711.5 121.4,706.0 128.4,701.1 135.4,703.6 142.4,698.3 149.4,697.8 156.4,696.3 163.4,695.9 170.4,698.7 177.4,697.4 184.4,696.4 191.4,696.0 198.4,693.9 205.4,688.1 212.4,690.4 219.4,691.9 226.4,691.0 233.4,690.0 240.4,690.3 247.4,690.5 254.4,694.1 261.4,703.5 268.4,713.3 275.4,721.3 282.4,728.8 289.4,738.8 296.4,749.2 303.4,761.8 310.4,768.7 317.4,775.5 324.4,780.2 331.4,776.4 338.4,775.1 345.4,770.7 352.4,764.1 359.4,758.2 366.4,751.7 373.4,747.0 380.4,737.9 387.4,731.3 394.4,721.0 401.4,710.0 408.4,698.1 415.4,687.0 422.4,676.3 429.4,664.4 436.4,657.6 443.4,650.8 450.4,646.6 457.4,645.0 464.4,647.7 471.4,649.1 478.4,650.3 485.4,647.4 492.4,642.7 499.4,642.4 506.4,647.0 513.4,652.2 520.4,656.0 527.4,659.4 534.4,661.6 541.4,654.1 548.4,652.7 555.4,650.4 562.4,653.7 569.4,657.7 576.4,661.3 583.4,663.0 590.4,680.8 597.4,687.6 604.4,695.2 611.4,706.5 618.4,714.6 625.4,722.8 632.4,724.6 639.4,724.4 646.4,718.0 653.4,713.4 660.4,714.7 667.4,714.9 674.4,718.5 681.4,719.8 688.4,718.9 695.4,720.9 702.4,718.4 709.4,721.2 716.4,722.9 723.4,722.8 730.4,722.3 737.4,721.3 744.4,714.0 751.4,714.4 758.4,714.3 765.4,712.8 772.4,711.1 779.4,709.8 786.4,708.2 793.4,710.3 800.4,714.7 807.4,716.4 814.4,720.4 821.4,715.8 828.4,714.0 835.4,710.1 842.4,703.8 849.4,702.3 856.4,705.7 863.4,708.9 870.4,709.6 877.4,705.2 884.4,705.1 891.4,707.1 898.4,706.5 905.4,707.8 912.4,705.2 919.4,700.9 926.4,695.4 933.4,695.3 940.4,693.2 947.4,689.3 954.4,685.1 961.4,672.6 968.4,662.4 975.4,657.1 982.4,663.3 989.4,666.6 996.4,672.6 1003.4,678.2 1010.4,684.0 1017.4,692.3 1024.4,701.5 1031.4,704.6 1038.4,705.5 1045.4,704.6 1052.4,704.1 1059.4,703.9 1066.4,703.9 1073.4,699.3 1080.4,697.1 1087.4,697.4 1094.4,702.9 1101.4,705.0 1108.4,705.6 1115.4,706.0 1122.4,704.3 1129.4,701.8 1136.4,700.4" fill="none" stroke="#ffffff" stroke-width="1"/>
<g stroke="#c0c0c0" fill="none" shape-rendering="auto"><path d="M562 53.5H549M552 51l-3 2.5l3 2.5"/><path d="M324 427.5H311M314 425l-3 2.5l3 2.5"/></g>
<g fill="#fa3636" stroke="none" shape-rendering="auto"><path d="M1133.7 261.7 L1138.8 244.5 L1136.5 242.7 L1144.7 235.8 L1144.7 246.3 L1142.4 245.9 Z"/><path d="M1145.2 235.5 L1156.4 250 L1157.5 261 L1148.4 253.7 L1151.3 252.5 Z"/><path d="M1157.5 261.2 L1164.4 240.3 L1161.7 238.1 L1172.7 228 L1172.7 245 L1169.5 243.4 Z"/><path d="M1172.3 227.3 L1184 210.3 L1181.4 208.8 L1190.6 202.8 L1189.2 213.3 L1186.3 211.8 L1173.8 228.3 Z"/></g>
</svg>
<div id="title">
<span class="t" style="left:0px">统</span>
<span class="t" style="left:30px">报价</span>
<span class="t" style="left:70px">分析</span>
<span class="t" style="left:110px">扩展行情</span>
<span class="t" style="left:173px">委托</span>
<span class="t" style="left:213px">智能</span>
<span class="t" style="left:253px">工具</span>
<span class="t" style="left:293px">资讯</span>
<span class="t" style="left:333px">帮助</span>
<span class="t" style="left:588px;color:#d81414;font:italic 900 15.5px/14px 'Noto Sans CJK SC',sans-serif;text-shadow:0 0 1px #fff,0 0 1px #fff;top:-3px">同花顺</span>
<span class="t" style="left:641px;color:#555">-</span><span class="t" style="left:652px;color:#555">伦敦贵金属技术分析</span>
<span class="t" style="left:984px;color:#800080">中国版伟哥上市<span style="font-weight:bold">?</span></span>
<span class="t" style="left:1094px;color:#800080">注册</span>
<span class="t" style="left:1128px;color:#800080">登录</span>
<svg style="position:absolute;left:1170px;top:0" width="44" height="14"><path d="M8.500 -1h7.300l1.200 6.500l2 4.300h-14l2-4.300z" fill="#828282"/><path d="M10 10.800h4l-2 2.200z" fill="#828282"/><path d="M29 2.200l4-3.200h11v12.600h-10.500v-6.600l-2 1.200z" fill="#848484"/></svg>
</div>
<div class="ls" style="top:16px;height:47.5px;background:#c6c6c6"></div>
<div class="ls" style="top:66px;height:49px;background:#c2c2c2"></div>
<div class="ls" style="top:117px;height:46.5px;background:#9e9e9e"></div>
<div class="ls" style="top:166px;height:73.5px;background:#a6a6a6"></div>
<div class="ls" style="top:240px;height:53.5px;background:#800000"></div>
<div class="ls" style="top:294.5px;height:46.5px;background:#a2a2a2"></div>
<div class="ls" style="top:343px;height:74px;background:#a2a2a2"></div>
<div class="ls" style="top:419px;height:52px;background:#a0a0a0"></div>
<div class="t" style="left:5px;top:17px"><span style="color:#c0c0c0">日线</span></div>
<div class="t w" style="left:37px;top:17px">伦敦银</div>
<div class="t" style="left:77px;top:17px"><span class="w">MA5: 16.471</span><span class="r ar">↑</span></div>
<div class="t" style="left:154px;top:17px"><span class="y">MA10: 16.478</span><span class="r ar">↑</span></div>
<div class="t" style="left:238px;top:17px"><span class="m">MA20: 16.450</span><span class="c ar">↓</span></div>
<div class="t" style="left:322px;top:17px"><span class="g">MA30: 16.563</span><span class="c ar">↓</span></div>
<div class="t" style="left:405px;top:17px"><span class="b">MA60: 16.509</span><span class="r ar">↑</span></div>
<div class="t" style="left:1051px;top:19px">加自选</div>
<div class="t" style="left:1093px;top:19px">均线</div>
<div class="t" style="left:1124px;top:19px">窗</div>
<svg style="position:absolute;left:1142px;top:19px" width="16" height="12"><path d="M1 4h6v-3l6 5l-6 5v-3h-6z" fill="#c8c8c8"/><rect x="13" y="1" width="2" height="10" fill="#c8c8c8"/></svg>
<div class="t" style="left:1102px;top:453px">指标说明</div>
<div class="t" style="left:1102px;top:602px">指标说明</div>
<div class="t" style="left:8.6px;top:126px;color:#f6f6f6;font-size:12.7px">19.1%(17.300)</div>
<div class="t" style="left:8.6px;top:197px;color:#f6f6f6;font-size:12.7px">38.2%(16.890)</div>
<div class="t" style="left:8.6px;top:240px;color:#f6f6f6;font-size:12.7px">50.0%(16.640)</div>
<div class="t" style="left:8.6px;top:284px;color:#f6f6f6;font-size:12.7px">61.8%(16.389)</div>
<div class="t" style="left:8.6px;top:427px;color:#f6f6f6;font-size:12.7px">100.0%(15.569)</div>
<div class="t" style="left:564px;top:47px;color:#b0b0b0">17.696</div>
<div class="t" style="left:324px;top:421px;color:#b0b0b0">15.550</div>
<div class="ax r" style="top:28px">17.815</div>
<div class="ax r" style="top:110.5px">17.338</div>
<div class="ax r" style="top:193.5px">16.861</div>
<div class="ax r" style="top:276px">16.385</div>
<div class="ax r" style="top:359px">15.908</div>
<div class="ax r" style="top:463.5px;left:1161px">+122.6</div>
<div class="ax r" style="top:484.5px;left:1161px">+100.8</div>
<div class="ax r" style="top:506px;left:1161px">+79.00</div>
<div class="ax r" style="top:528px;left:1161px">+56.18</div>
<div class="ax r" style="top:548.5px;left:1161px">+34.40</div>
<div class="ax r" style="top:569.5px;left:1161px">+12.61</div>
<div class="ax" style="top:613px;left:1161px;color:#ff3232">+0.293</div>
<div class="ax" style="top:633px;left:1161px;color:#ff3232">+0.216</div>
<div class="ax" style="top:653px;left:1161px;color:#ff3232">+0.139</div>
<div class="ax" style="top:673px;left:1161px;color:#ff3232">+0.062</div>
<div class="ax" style="top:694px;left:1161px;color:#00ff00">-0.019</div>
<div class="ax" style="top:714px;left:1161px;color:#00ff00">-0.096</div>
<div class="ax" style="top:734px;left:1161px;color:#00ff00">-0.173</div>
<div class="ax" style="top:754px;left:1161px;color:#00ff00">-0.250</div>
<div class="t" style="left:5px;top:453px"><span style="color:#ffff80">KDJ(9,3,3) K: +48.92</span><span class="r ar">↑</span> <span class="c">D: +46.09</span><span class="r ar">↑</span> <span class="m">J: +54.57</span><span class="r ar">↑</span></div>
<div class="t" style="left:5px;top:602px"><span style="color:#c0c0c0">MACD(12,26,9)</span> <span class="r">MACD: +0.014</span><span class="r ar">↑</span> <span class="w">DIFF: -0.022</span><span class="r ar">↑</span> <span class="y">DEA: -0.029</span><span class="r ar">↑</span></div>
<div class="t r" style="left:8px;top:783px">10</div>
<div class="t r" style="left:124.5px;top:783px">11</div>
<div class="t r" style="left:278px;top:783px">12</div>
<div class="t r" style="left:423.5px;top:783px">01</div>
<div class="t r" style="left:584.5px;top:783px">02</div>
<div class="t r" style="left:724.7px;top:783px">03</div>
<div class="t r" style="left:879px;top:783px">04</div>
<div class="t r" style="left:1025.6px;top:783px">05</div>
<div class="tab" style="left:98px;width:52px;background:#9c0000;color:#fff;clip-path:polygon(0 0,100% 0,calc(100% - 6px) 100%,0 100%);top:800px;height:15px">MACD</div>
<div class="tab" style="left:149.3px;width:34.9px;clip-path:polygon(4px 0,calc(100% - 4px) 0,100% 50%,calc(100% - 4px) 100%,4px 100%,0 50%);padding-left:0;">KDJ</div>
<div class="tab" style="left:182.7px;width:34.8px;">RSI</div>
<div class="tab" style="left:216.8px;width:45.2px;">BOLL</div>
<div class="tab" style="left:263.0px;width:42.2px;">W&amp;R</div>
<div class="tab" style="left:304.5px;width:35.3px;">DMI</div>
<div class="tab" style="left:339.0px;width:41.0px;">BIAS</div>
<div class="tab" style="left:380.0px;width:31.0px;">ASI</div>
<div class="tab" style="left:411.5px;width:29.5px;">VR</div>
<div class="tab" style="left:439.8px;width:50.0px;">ARBR</div>
<div class="tab" style="left:489.0px;width:40.6px;">DPO</div>
<div class="tab" style="left:528.8px;width:41.0px;">TRIX</div>
<div class="tab" style="left:569.0px;width:51.9px;">新DMA</div>
<div class="tab" style="left:620.5px;width:32.5px;">BBI</div>
<div class="tab" style="left:652.7px;width:39.8px;">MTM</div>
<div class="tab" style="left:691.8px;width:38.6px;">OBV</div>
<div class="tab" style="left:729.7px;width:40.5px;">SAR</div>
<div class="tab" style="left:769.5px;width:55.7px;clip-path:polygon(0 0,100% 0,calc(100% - 6px) 100%,7px 100%);padding-right:5px;">EXPMA</div>
<div style="position:absolute;left:-30px;top:792px;width:132px;height:40px;background:#2a2a32;border-radius:24px 18px 0 0"></div>
<svg style="position:absolute;left:0;top:788px" width="110" height="30" shape-rendering="auto"><circle cx="19" cy="33" r="27" fill="#3a3a42"/><path d="M17.5 5.500A27 27 0 0 1 44 28" fill="none" stroke="#40e8c8" stroke-width="1.600"/></svg>
<div class="t" style="left:1px;top:806px;font-size:24px;line-height:24px;height:24px;color:#fff;letter-spacing:-1px">75</div>
<div class="t" style="left:50px;top:802px;font:bold 8.5px/14px 'DejaVu Sans',sans-serif;color:#38a8f8">↑</div>
<div class="t" style="left:67px;top:802px;font-size:11px"><span class="w">2.7</span><span style="color:#aaa;font-size:10px">K/s</span></div>
<div class="t" style="left:9px;top:765.5px;font:600 17.8px/22px 'Liberation Serif','Noto Serif CJK SC',serif;height:22px;color:#b4b4b4;letter-spacing:-0.3px">第一纸白银分析网</div>
<div class="t" style="left:10px;top:788px;font:15.3px/20px 'Liberation Mono',monospace;height:20px;color:#c4c4c4;-webkit-text-stroke:0.45px #c4c4c4">www.diyizby.com</div>
</body></html>
